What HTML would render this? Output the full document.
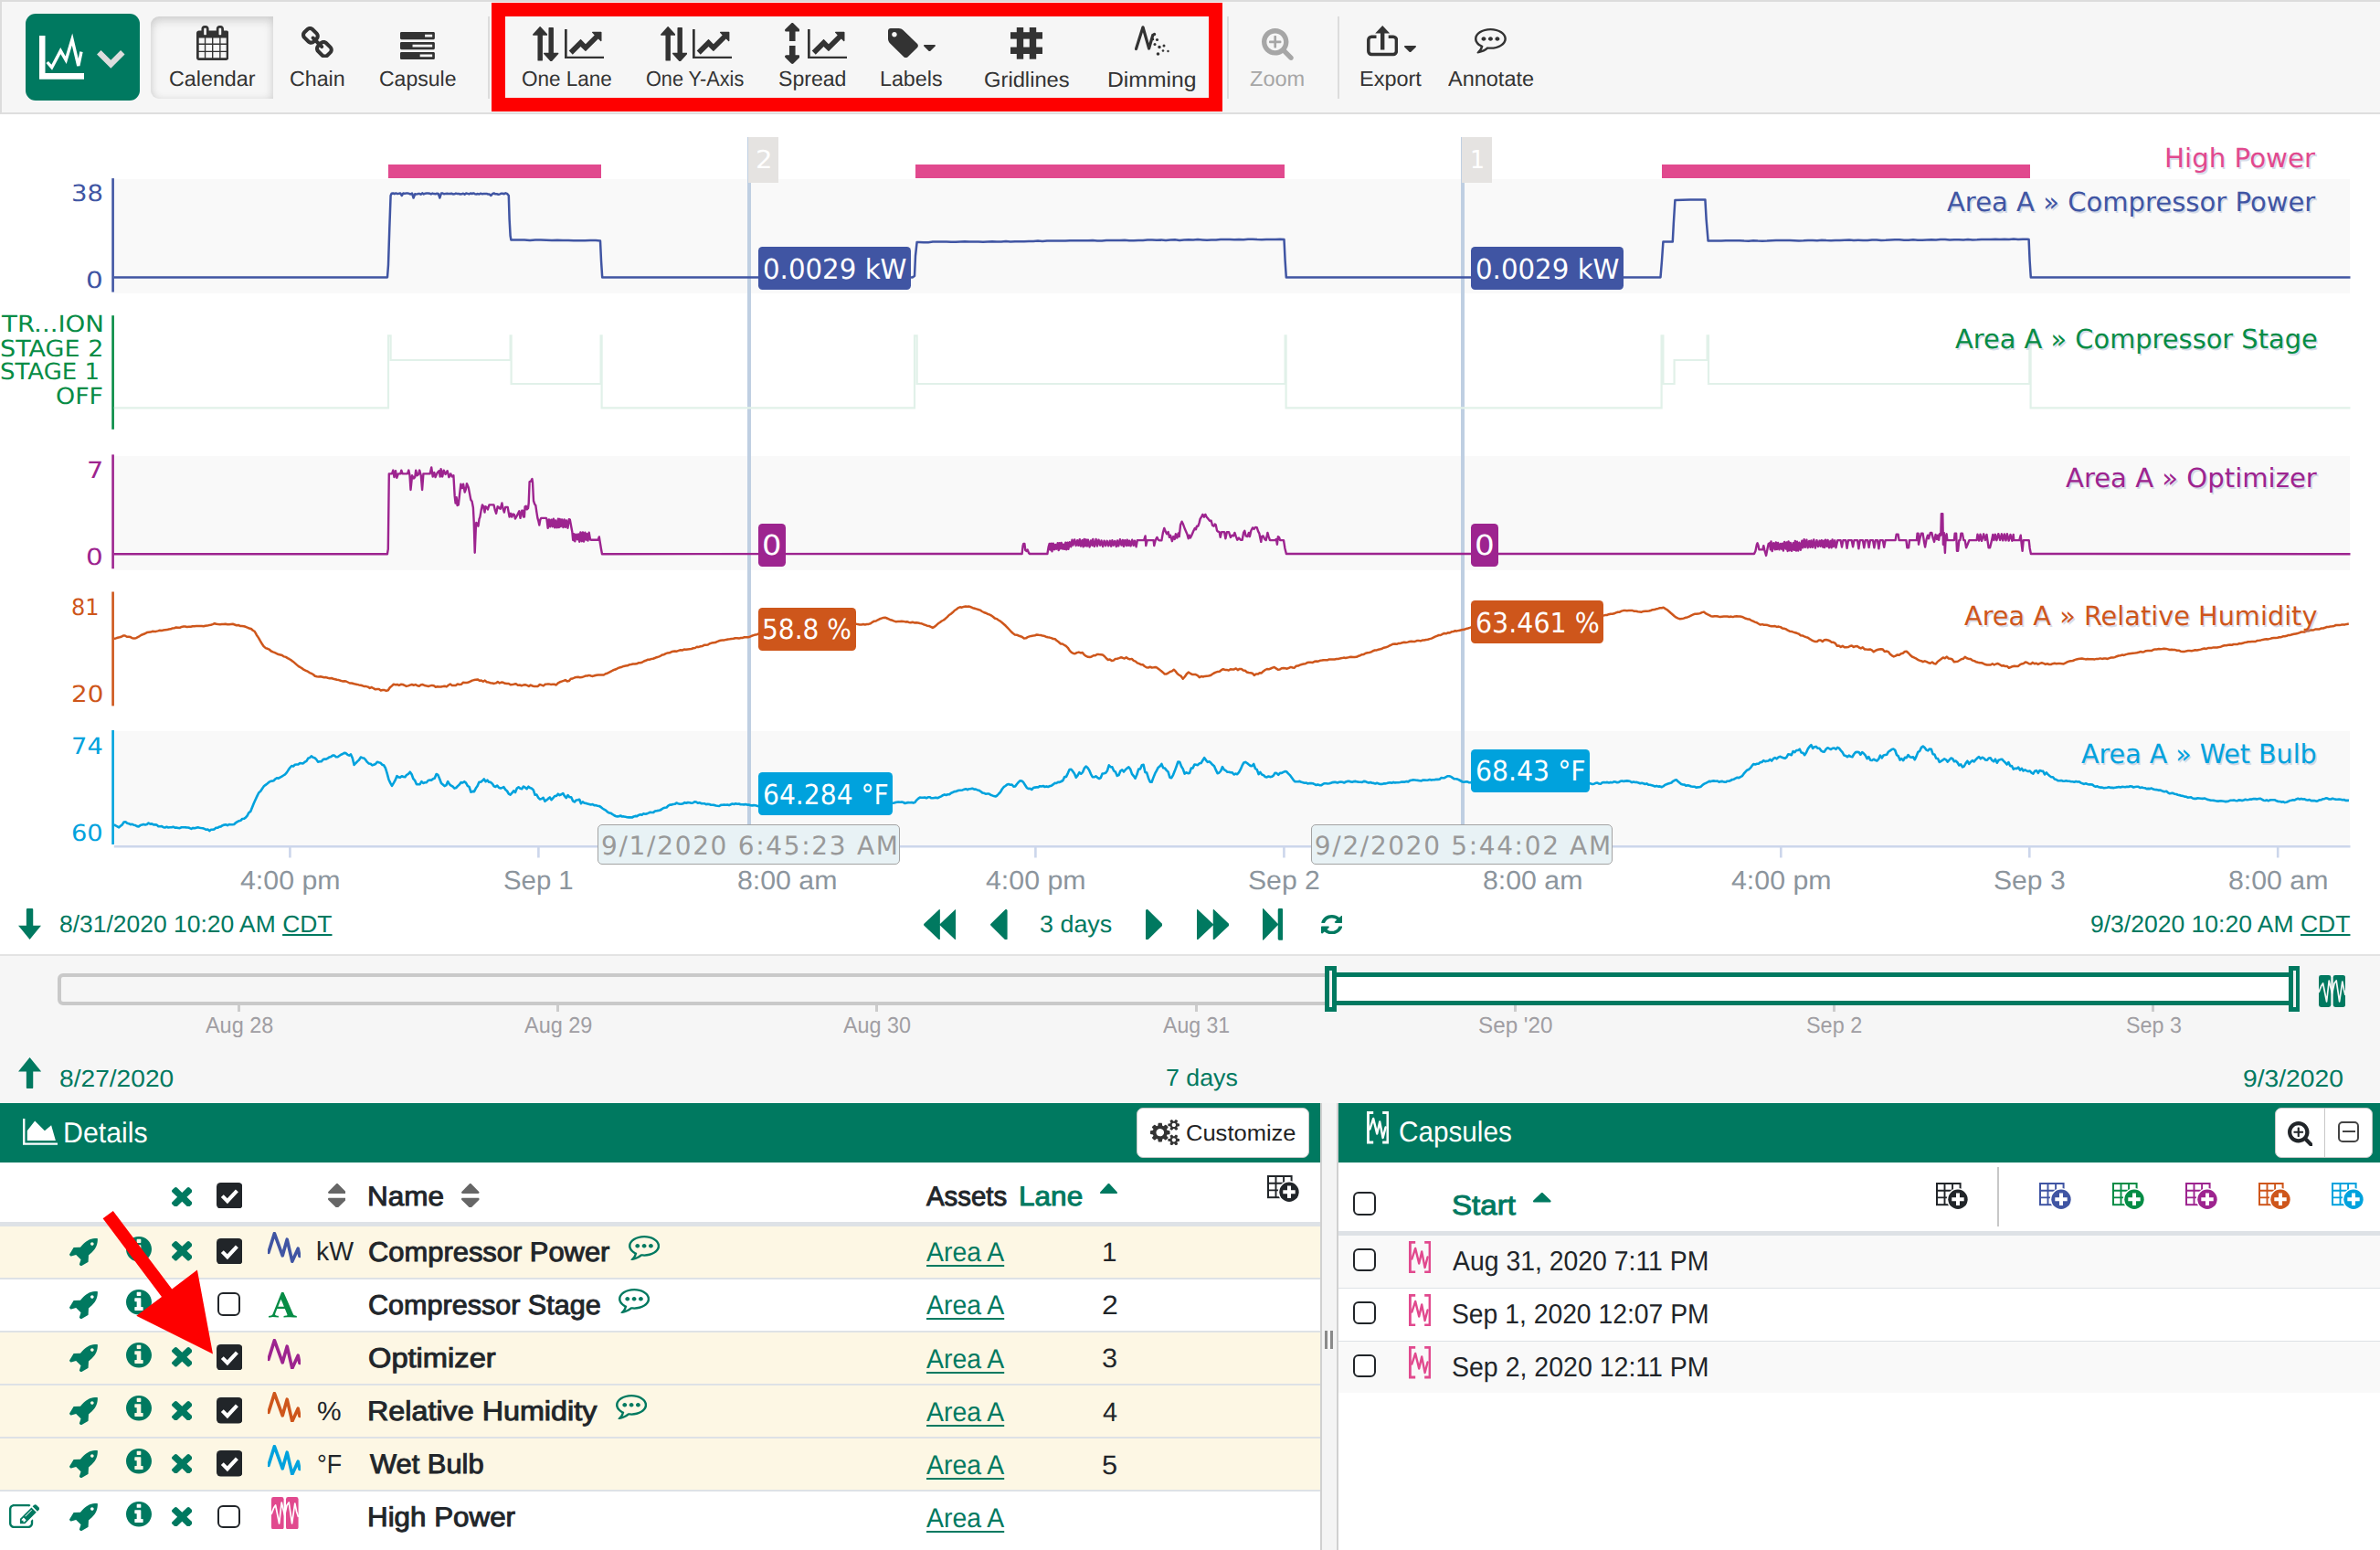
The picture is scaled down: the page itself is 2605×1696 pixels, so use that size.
<!DOCTYPE html>
<html lang="en"><head><meta charset="utf-8"><title>Seeq Workbench - Trend</title>
<style>
html,body{margin:0;padding:0;background:#fff}
body{width:2605px;height:1696px;position:relative;overflow:hidden;font-family:"Liberation Sans",sans-serif}
#app{position:absolute;left:0;top:0;width:2605px;height:1696px;overflow:hidden}
#app div,#app svg.i{position:absolute}
.t{position:absolute;white-space:pre;line-height:1;transform-origin:0 0;display:block;text-rendering:geometricPrecision}
a.t,.u{text-decoration:underline}
</style></head>
<body><div id="app">
<div class="tb" style="left:0px;top:0px;width:2605px;height:124.6px;background:#f6f6f6;border-top:2px solid #dcdcdc;border-left:2px solid #dcdcdc;border-bottom:2.2px solid #dedede;box-sizing:border-box;"></div>
<div style="left:28px;top:14.8px;width:125.2px;height:95.2px;background:#007960;border-radius:11px;"></div>
<svg class="i" style="left:0px;top:0px;width:160px;height:124px;" viewBox="0 0 160 124" preserveAspectRatio="none"><polyline points="43,39 43,86.7 92,86.7" fill="none" stroke="#fff" stroke-width="0"/><path d="M43 39h6.5v41h42.5v6.7h-49z" fill="#fff"/><polyline points="51.7,68 56.7,73.7 66.3,55.6 72.2,65.8 79,43 85.8,72 89,56.7" fill="none" stroke="#fff" stroke-width="3.4" stroke-linejoin="miter" stroke-linecap="butt"/><polyline points="108.3,57.3 121.3,70.3 134.3,57.3" fill="none" stroke="#ddd" stroke-width="6.4"/></svg>
<div style="left:165px;top:17.8px;width:133.8px;height:90px;background:#f6f6f6;border-radius:9px 0 0 9px;box-shadow:inset 0 5px 11px rgba(0,0,0,.13), inset 0 0 9px rgba(0,0,0,.07);"></div>
<svg class="i" style="left:214.9px;top:28.4px;width:35.4px;height:37.9px;" viewBox="0 -1536 1664 1792" preserveAspectRatio="none"><path fill="#333" d="M128 128V-160H416V128ZM480 128V-160H800V128ZM128 -224V-544H416V-224ZM480 -224V-544H800V-224ZM128 -608V-896H416V-608ZM864 128V-160H1184V128ZM480 -608V-896H800V-608ZM1248 128V-160H1536V128ZM864 -224V-544H1184V-224ZM512 -1088C512 -1071 497 -1056 480 -1056H416C399 -1056 384 -1071 384 -1088V-1376C384 -1393 399 -1408 416 -1408H480C497 -1408 512 -1393 512 -1376V-1088ZM1248 -224V-544H1536V-224ZM864 -608V-896H1184V-608ZM1248 -608V-896H1536V-608ZM1280 -1088C1280 -1071 1265 -1056 1248 -1056H1184C1167 -1056 1152 -1071 1152 -1088V-1376C1152 -1393 1167 -1408 1184 -1408H1248C1265 -1408 1280 -1393 1280 -1376V-1088ZM1664 -1152C1664 -1222 1606 -1280 1536 -1280H1408V-1376C1408 -1464 1336 -1536 1248 -1536H1184C1096 -1536 1024 -1464 1024 -1376V-1280H640V-1376C640 -1464 568 -1536 480 -1536H416C328 -1536 256 -1464 256 -1376V-1280H128C58 -1280 0 -1222 0 -1152V128C0 198 58 256 128 256H1536C1606 256 1664 198 1664 128Z"/></svg>
<span class="t" style="left:184.84px;top:75px;font-size:23.4px;color:#333;transform:scaleX(0.9955);">Calendar</span>
<svg class="i" style="left:330px;top:28.8px;width:34.8px;height:34.7px;" viewBox="16 -1520 1632 1632" preserveAspectRatio="none"><path fill="#333" d="M1456 -320C1456 -295 1446 -271 1428 -253L1281 -107C1263 -90 1238 -81 1213 -81C1188 -81 1163 -90 1145 -108L939 -315C921 -333 911 -358 911 -383C911 -413 923 -436 944 -456C977 -423 1005 -384 1056 -384C1109 -384 1152 -427 1152 -480C1152 -531 1113 -559 1080 -592C1100 -613 1123 -624 1152 -624C1177 -624 1202 -614 1220 -596L1428 -388C1446 -370 1456 -346 1456 -320ZM753 -1025C753 -995 741 -972 720 -952C687 -985 659 -1024 608 -1024C555 -1024 512 -981 512 -928C512 -877 551 -849 584 -816C564 -795 541 -785 512 -785C487 -785 462 -794 444 -812L236 -1020C218 -1038 208 -1062 208 -1088C208 -1113 218 -1137 236 -1155L383 -1301C401 -1318 426 -1328 451 -1328C476 -1328 501 -1318 519 -1300L725 -1093C743 -1075 753 -1050 753 -1025ZM1648 -320C1648 -397 1619 -469 1564 -524L1356 -732C1302 -786 1228 -816 1152 -816C1073 -816 999 -784 944 -728L856 -816C912 -871 944 -946 944 -1025C944 -1101 915 -1174 861 -1228L655 -1435C601 -1490 528 -1520 451 -1520C375 -1520 302 -1491 248 -1437L101 -1291C47 -1238 16 -1164 16 -1088C16 -1011 45 -939 100 -884L308 -676C362 -622 436 -592 512 -592C591 -592 665 -624 720 -680L808 -592C752 -537 720 -462 720 -383C720 -307 749 -234 803 -180L1009 27C1063 82 1136 112 1213 112C1289 112 1362 83 1416 29L1563 -117C1617 -170 1648 -244 1648 -320Z"/></svg>
<span class="t" style="left:316.84px;top:75px;font-size:23.4px;color:#333;transform:scaleX(0.9918);">Chain</span>
<svg class="i" style="left:437.9px;top:35.2px;width:37.9px;height:30.1px;" viewBox="0 -1408 1792 1408" preserveAspectRatio="none"><path fill="#333" d="M1024 -128V-256H1664V-128ZM640 -640V-768H1664V-640ZM1280 -1152V-1280H1664V-1152ZM1792 -320C1792 -355 1763 -384 1728 -384H64C29 -384 0 -355 0 -320V-64C0 -29 29 0 64 0H1728C1763 0 1792 -29 1792 -64ZM1792 -832C1792 -867 1763 -896 1728 -896H64C29 -896 0 -867 0 -832V-576C0 -541 29 -512 64 -512H1728C1763 -512 1792 -541 1792 -576ZM1792 -1344C1792 -1379 1763 -1408 1728 -1408H64C29 -1408 0 -1379 0 -1344V-1088C0 -1053 29 -1024 64 -1024H1728C1763 -1024 1792 -1053 1792 -1088Z"/></svg>
<span class="t" style="left:414.55px;top:75px;font-size:23.4px;color:#333;transform:scaleX(0.9838);">Capsule</span>
<div style="left:534px;top:17.8px;width:2px;height:90px;background:#dcdcdc;"></div>
<div style="left:538px;top:2.5px;width:800px;height:119px;border:15px solid #fe0000;box-sizing:border-box;"></div>
<svg class="i" style="left:582.7px;top:29px;width:16.4px;height:37.6px;" viewBox="0.27 -1472 767.45 1728" preserveAspectRatio="none"><path fill="#333" d="M765 -1043C770 -1055 768 -1068 760 -1078L405 -1462C399 -1468 390 -1472 381 -1472C381 -1472 381 -1472 381 -1472C372 -1472 364 -1468 358 -1462L8 -1078C0 -1068 -2 -1055 3 -1043C8 -1031 19 -1024 32 -1024H256V224C256 242 270 256 288 256H480C498 256 512 242 512 224V-1024H736C749 -1024 760 -1032 765 -1043Z"/></svg><svg class="i" style="left:595.3px;top:29.8px;width:16.4px;height:37.6px;" viewBox="0.27 -1536 767.45 1728" preserveAspectRatio="none"><path fill="#333" d="M765 -237C760 -249 749 -256 736 -256H512V-1504C512 -1522 498 -1536 480 -1536H288C270 -1536 256 -1522 256 -1504V-256H32C19 -256 8 -248 3 -237C-2 -225 0 -212 8 -202L363 182C369 188 378 192 387 192C387 192 387 192 387 192C396 192 404 188 410 182L760 -202C768 -212 770 -225 765 -237Z"/></svg>
<svg class="i" style="left:617.8px;top:31.8px;width:43.2px;height:32.4px;" viewBox="0 -1408 2048 1536" preserveAspectRatio="none"><path fill="#333" d="M2048 0H128V-1408H0V128H2048ZM1920 -1248C1920 -1266 1906 -1280 1888 -1280H1453C1425 -1280 1410 -1246 1431 -1225L1552 -1104L1088 -640L855 -873C842 -886 822 -886 809 -873L224 -288L416 -96L832 -512L1065 -279C1078 -266 1098 -266 1111 -279L1744 -912L1865 -791C1886 -770 1920 -785 1920 -813Z"/></svg>
<span class="t" style="left:571.14px;top:75px;font-size:23.4px;color:#333;transform:scaleX(0.9608);">One Lane</span>
<svg class="i" style="left:722.9px;top:29px;width:16.4px;height:37.6px;" viewBox="0.27 -1472 767.45 1728" preserveAspectRatio="none"><path fill="#333" d="M765 -1043C770 -1055 768 -1068 760 -1078L405 -1462C399 -1468 390 -1472 381 -1472C381 -1472 381 -1472 381 -1472C372 -1472 364 -1468 358 -1462L8 -1078C0 -1068 -2 -1055 3 -1043C8 -1031 19 -1024 32 -1024H256V224C256 242 270 256 288 256H480C498 256 512 242 512 224V-1024H736C749 -1024 760 -1032 765 -1043Z"/></svg><svg class="i" style="left:735.5px;top:29.8px;width:16.4px;height:37.6px;" viewBox="0.27 -1536 767.45 1728" preserveAspectRatio="none"><path fill="#333" d="M765 -237C760 -249 749 -256 736 -256H512V-1504C512 -1522 498 -1536 480 -1536H288C270 -1536 256 -1522 256 -1504V-256H32C19 -256 8 -248 3 -237C-2 -225 0 -212 8 -202L363 182C369 188 378 192 387 192C387 192 387 192 387 192C396 192 404 188 410 182L760 -202C768 -212 770 -225 765 -237Z"/></svg>
<svg class="i" style="left:758.3px;top:31.8px;width:43.1px;height:32.4px;" viewBox="0 -1408 2048 1536" preserveAspectRatio="none"><path fill="#333" d="M2048 0H128V-1408H0V128H2048ZM1920 -1248C1920 -1266 1906 -1280 1888 -1280H1453C1425 -1280 1410 -1246 1431 -1225L1552 -1104L1088 -640L855 -873C842 -886 822 -886 809 -873L224 -288L416 -96L832 -512L1065 -279C1078 -266 1098 -266 1111 -279L1744 -912L1865 -791C1886 -770 1920 -785 1920 -813Z"/></svg>
<span class="t" style="left:706.88px;top:75px;font-size:23.4px;color:#333;transform:scaleX(0.9269);">One Y-Axis</span>
<svg class="i" style="left:858.8px;top:25px;width:16.5px;height:44.9px;" viewBox="64 -1536 640 1792" preserveAspectRatio="none"><path fill="#333" d="M704 -1216C704 -1233 697 -1249 685 -1261L429 -1517C417 -1529 401 -1536 384 -1536C367 -1536 351 -1529 339 -1517L83 -1261C71 -1249 64 -1233 64 -1216C64 -1181 93 -1152 128 -1152H256V-128H128C93 -128 64 -99 64 -64C64 -47 71 -31 83 -19L339 237C351 249 367 256 384 256C401 256 417 249 429 237L685 -19C697 -31 704 -47 704 -64C704 -99 675 -128 640 -128H512V-1152H640C675 -1152 704 -1181 704 -1216Z"/></svg>
<div style="left:862px;top:44.5px;width:10px;height:5.8px;background:#f6f6f6;"></div>
<svg class="i" style="left:883.7px;top:31.8px;width:43.2px;height:32.4px;" viewBox="0 -1408 2048 1536" preserveAspectRatio="none"><path fill="#333" d="M2048 0H128V-1408H0V128H2048ZM1920 -1248C1920 -1266 1906 -1280 1888 -1280H1453C1425 -1280 1410 -1246 1431 -1225L1552 -1104L1088 -640L855 -873C842 -886 822 -886 809 -873L224 -288L416 -96L832 -512L1065 -279C1078 -266 1098 -266 1111 -279L1744 -912L1865 -791C1886 -770 1920 -785 1920 -813Z"/></svg>
<span class="t" style="left:851.66px;top:75px;font-size:23.4px;color:#333;transform:scaleX(0.9864);">Spread</span>
<svg class="i" style="left:972.2px;top:31.3px;width:32.9px;height:32.2px;" viewBox="0 -1408 1515 1515" preserveAspectRatio="none"><path fill="#333" d="M448 -1088C448 -1017 391 -960 320 -960C249 -960 192 -1017 192 -1088C192 -1159 249 -1216 320 -1216C391 -1216 448 -1159 448 -1088ZM1515 -512C1515 -546 1501 -579 1478 -603L763 -1317C712 -1368 615 -1408 544 -1408H128C58 -1408 0 -1350 0 -1280V-864C0 -793 40 -696 91 -646L806 70C829 93 862 107 896 107C930 107 963 93 987 70L1478 -422C1501 -445 1515 -478 1515 -512Z"/></svg>
<svg class="i" style="left:1010.8px;top:48.8px;width:12.9px;height:7.4px;" viewBox="0 -896 1024 576" preserveAspectRatio="none"><path fill="#333" d="M1024 -832C1024 -867 995 -896 960 -896H64C29 -896 0 -867 0 -832C0 -815 7 -799 19 -787L467 -339C479 -327 495 -320 512 -320C529 -320 545 -327 557 -339L1005 -787C1017 -799 1024 -815 1024 -832Z"/></svg>
<span class="t" style="left:963.49px;top:75px;font-size:23.4px;color:#333;transform:scaleX(0.9939);">Labels</span>
<svg class="i" style="left:1105.8px;top:30px;width:35.2px;height:34.7px;" viewBox="0 0 35.2 34.7" preserveAspectRatio="none"><rect x="6.8" y="0" width="7.4" height="34.7" fill="#333"/><rect x="20.8" y="0" width="7.4" height="34.7" fill="#333"/><rect x="0" y="5.2" width="35.2" height="7.4" fill="#333"/><rect x="0" y="21.6" width="35.2" height="7.4" fill="#333"/></svg>
<span class="t" style="left:1076.51px;top:76px;font-size:23.4px;color:#333;transform:scaleX(1.0152);">Gridlines</span>
<svg class="i" style="left:1241.5px;top:28.4px;width:38.1px;height:32.9px;" viewBox="0 0 38.1 32.9" preserveAspectRatio="none"><polyline points="1.5,25.5 9,1.8 15.6,25 19.8,10.5" fill="none" stroke="#333" stroke-width="3.2" stroke-linejoin="round" stroke-linecap="round"/><circle cx="21.5" cy="9.5" r="1.7" fill="#333"/><circle cx="24.5" cy="15.5" r="1.6" fill="#333"/><circle cx="22" cy="20.5" r="1.5" fill="#333"/><circle cx="27" cy="23.5" r="1.7" fill="#333"/><circle cx="32" cy="22" r="1.5" fill="#333"/><circle cx="25.5" cy="31" r="1.8" fill="#333"/><circle cx="31" cy="27.5" r="1.3" fill="#333"/><circle cx="36.5" cy="28" r="1.2" fill="#333"/><circle cx="20" cy="15" r="1.2" fill="#333"/></svg>
<span class="t" style="left:1211.77px;top:76px;font-size:23.4px;color:#333;transform:scaleX(1.0574);">Dimming</span>
<div style="left:1342.6px;top:17.8px;width:2px;height:90px;background:#dcdcdc;"></div>
<svg class="i" style="left:1381px;top:31.3px;width:34.8px;height:35px;" viewBox="0 -1408 1664 1664" preserveAspectRatio="none"><path fill="#a6a6a6" d="M1024 -736C1024 -753 1009 -768 992 -768H768V-992C768 -1009 753 -1024 736 -1024H672C655 -1024 640 -1009 640 -992V-768H416C399 -768 384 -753 384 -736V-672C384 -655 399 -640 416 -640H640V-416C640 -399 655 -384 672 -384H736C753 -384 768 -399 768 -416V-640H992C1009 -640 1024 -655 1024 -672ZM1152 -704C1152 -457 951 -256 704 -256C457 -256 256 -457 256 -704C256 -951 457 -1152 704 -1152C951 -1152 1152 -951 1152 -704ZM1664 128C1664 94 1650 61 1627 38L1284 -305C1365 -422 1408 -562 1408 -704C1408 -1093 1093 -1408 704 -1408C315 -1408 0 -1093 0 -704C0 -315 315 0 704 0C846 0 986 -43 1103 -124L1446 218C1469 242 1502 256 1536 256C1607 256 1664 199 1664 128Z"/></svg>
<span class="t" style="left:1368.27px;top:75px;font-size:23.4px;color:#a6a6a6;transform:scaleX(1.0075);">Zoom</span>
<div style="left:1464px;top:17.8px;width:2px;height:90px;background:#dcdcdc;"></div>
<svg class="i" style="left:1495.7px;top:28.4px;width:34.6px;height:33.2px;" viewBox="0 0 34.6 33.2" preserveAspectRatio="none"><path d="M10.5 12.2H5.2a3.4 3.4 0 0 0-3.4 3.4v12.4a3.4 3.4 0 0 0 3.4 3.4h23.8a3.4 3.4 0 0 0 3.4-3.4V15.6a3.4 3.4 0 0 0-3.4-3.4h-5.3" fill="none" stroke="#333" stroke-width="3.5"/><path d="M15 26.4V8.5H9.2L17.2 0l8 8.5h-5.8v17.9z" fill="#333"/></svg>
<svg class="i" style="left:1537px;top:49.5px;width:13px;height:7.3px;" viewBox="0 -896 1024 576" preserveAspectRatio="none"><path fill="#333" d="M1024 -832C1024 -867 995 -896 960 -896H64C29 -896 0 -867 0 -832C0 -815 7 -799 19 -787L467 -339C479 -327 495 -320 512 -320C529 -320 545 -327 557 -339L1005 -787C1017 -799 1024 -815 1024 -832Z"/></svg>
<span class="t" style="left:1488.47px;top:75px;font-size:23.4px;color:#333;transform:scaleX(1.0039);">Export</span>
<svg class="i" style="left:1613.9px;top:31.2px;width:34.9px;height:27.4px;" viewBox="0 -1280 1792 1536" preserveAspectRatio="none"><path fill="#333" d="M640 -640C640 -711 583 -768 512 -768C441 -768 384 -711 384 -640C384 -569 441 -512 512 -512C583 -512 640 -569 640 -640ZM1024 -640C1024 -711 967 -768 896 -768C825 -768 768 -711 768 -640C768 -569 825 -512 896 -512C967 -512 1024 -569 1024 -640ZM1408 -640C1408 -711 1351 -768 1280 -768C1209 -768 1152 -711 1152 -640C1152 -569 1209 -512 1280 -512C1351 -512 1408 -569 1408 -640ZM896 -1152C1312 -1152 1664 -918 1664 -640C1664 -362 1312 -128 896 -128C853 -128 809 -131 766 -136L709 -142L666 -104C584 -32 492 25 391 67C417 21 442 -34 461 -105L488 -201L401 -251C228 -349 128 -491 128 -640C128 -918 480 -1152 896 -1152ZM1792 -640C1792 -993 1391 -1280 896 -1280C401 -1280 0 -993 0 -640C0 -437 132 -256 338 -139C291 28 219 88 156 159C141 177 124 192 129 217C129 217 129 217 129 218C134 240 152 256 172 256C173 256 175 256 177 256C216 251 255 244 291 234C464 190 620 108 751 -8C798 -3 847 0 896 0C1391 0 1792 -286 1792 -640Z"/></svg>
<span class="t" style="left:1584.95px;top:75px;font-size:23.4px;color:#333;transform:scaleX(1.0043);">Annotate</span>
<div style="left:124.8px;top:196.3px;width:2447.7px;height:124.7px;background:#f9f9f9;"></div>
<div style="left:124.8px;top:498.8px;width:2447.7px;height:124.9px;background:#f9f9f9;"></div>
<div style="left:124.8px;top:800.3px;width:2447.7px;height:125px;background:#f9f9f9;"></div>
<div style="left:425.4px;top:180px;width:232.6px;height:14.8px;background:#E1498E;"></div>
<div style="left:1001.5px;top:180px;width:404.3px;height:14.8px;background:#E1498E;"></div>
<div style="left:1819px;top:180px;width:403px;height:14.8px;background:#E1498E;"></div>
<div style="left:818.2px;top:150px;width:3.8px;height:752.5px;background:#bfcfe2;"></div>
<div style="left:1599.3px;top:150px;width:3.8px;height:752.5px;background:#bfcfe2;"></div>
<svg class="i" style="left:0;top:140px;width:2605px;height:830px" viewBox="0 140 2605 830"><line x1="123.6" y1="195.1" x2="123.6" y2="319.6" stroke="#4055A3" stroke-width="2.6"/><line x1="123.6" y1="345.2" x2="123.6" y2="469.8" stroke="#068C45" stroke-width="2.6"/><line x1="123.6" y1="497.4" x2="123.6" y2="622.3" stroke="#9D248F" stroke-width="2.6"/><line x1="123.6" y1="647.5" x2="123.6" y2="772.4" stroke="#CE561B" stroke-width="2.6"/><line x1="123.6" y1="799" x2="123.6" y2="924" stroke="#00A2DD" stroke-width="2.6"/><path d="M124.8 926.3H2572.5" stroke="#ccd6eb" stroke-width="2.6" fill="none"/><line x1="317.4" y1="926" x2="317.4" y2="938.5" stroke="#ccd6eb" stroke-width="2.6"/><line x1="589.4" y1="926" x2="589.4" y2="938.5" stroke="#ccd6eb" stroke-width="2.6"/><line x1="861.4" y1="926" x2="861.4" y2="938.5" stroke="#ccd6eb" stroke-width="2.6"/><line x1="1133.4" y1="926" x2="1133.4" y2="938.5" stroke="#ccd6eb" stroke-width="2.6"/><line x1="1405.4" y1="926" x2="1405.4" y2="938.5" stroke="#ccd6eb" stroke-width="2.6"/><line x1="1677.3" y1="926" x2="1677.3" y2="938.5" stroke="#ccd6eb" stroke-width="2.6"/><line x1="1949.3" y1="926" x2="1949.3" y2="938.5" stroke="#ccd6eb" stroke-width="2.6"/><line x1="2221.3" y1="926" x2="2221.3" y2="938.5" stroke="#ccd6eb" stroke-width="2.6"/><line x1="2493.2" y1="926" x2="2493.2" y2="938.5" stroke="#ccd6eb" stroke-width="2.6"/><polyline points="124.8,446.4 425.0,446.4 425.0,367.3 427.6,367.3 427.6,394.0 558.6,394.0 558.6,367.3 559.6,367.3 559.6,420.0 657.6,420.0 657.6,367.3 658.6,367.3 658.6,446.4 1001.0,446.4 1001.0,367.3 1003.6,367.3 1003.6,420.0 1406.6,420.0 1406.6,367.3 1407.6,367.3 1407.6,446.4 1818.6,446.4 1818.6,367.3 1820.4,367.3 1820.4,420.0 1832.6,420.0 1832.6,394.0 1868.6,394.0 1868.6,367.3 1870.0,367.3 1870.0,420.0 2221.4,420.0 2221.4,367.3 2222.6,367.3 2222.6,446.4 2572.5,446.4" fill="none" stroke="#e1f1e9" stroke-width="2.2" stroke-linejoin="miter"/><polyline points="124.8,303.4 424.0,303.4 425.0,290.0 426.3,250.0 427.6,214.0 428.6,211.8 430.2,211.5 431.8,212.2 433.4,211.4 435.0,212.1 436.6,211.8 438.2,211.4 439.8,214.0 441.4,211.4 443.0,211.9 444.6,211.4 446.2,211.4 447.8,211.9 449.4,212.5 451.0,211.5 452.6,216.5 454.2,212.2 455.8,212.6 457.4,212.1 459.0,211.9 460.6,212.7 462.2,211.4 463.8,212.5 465.4,211.7 467.0,211.5 468.6,211.5 470.2,211.7 471.8,212.4 473.4,211.6 475.0,212.1 476.6,212.2 478.2,211.8 479.8,212.1 481.4,216.5 483.0,211.4 484.6,211.6 486.2,212.3 487.8,211.9 489.4,211.7 491.0,212.1 492.6,211.9 494.2,211.7 495.8,212.4 497.4,212.3 499.0,211.6 500.6,212.1 502.2,212.0 503.8,212.5 505.4,212.3 507.0,211.7 508.6,212.7 510.2,211.5 511.8,211.9 513.4,212.4 515.0,211.5 516.6,212.0 518.2,211.4 519.8,212.2 521.4,212.4 523.0,212.1 524.6,212.5 526.2,211.7 527.8,212.3 529.4,212.1 531.0,212.1 532.6,211.9 534.2,212.5 535.8,212.6 537.4,214.0 539.0,212.2 540.6,211.4 542.2,212.3 543.8,212.2 545.4,212.7 547.0,212.5 548.6,211.7 550.2,211.8 551.8,212.2 553.4,211.3 555.0,211.9 556.8,214.0 557.6,240.0 558.6,258.0 559.4,262.6 562.0,262.4 568.0,262.4 574.0,262.4 580.0,262.9 586.0,262.5 592.0,262.6 598.0,262.8 604.0,263.1 610.0,262.7 616.0,262.9 622.0,263.0 628.0,263.3 634.0,263.3 640.0,263.3 646.0,263.0 652.0,263.1 657.0,263.5 658.0,285.0 659.2,303.4 998.8,303.4 1001.0,302.0 1002.0,280.0 1003.6,265.0 1006.0,264.9 1011.0,265.2 1016.0,265.2 1021.0,264.6 1026.0,264.6 1031.0,264.6 1036.0,264.6 1041.0,264.7 1046.0,264.7 1051.0,264.5 1056.0,264.2 1061.0,264.5 1066.0,264.4 1071.0,264.5 1076.0,264.7 1081.0,264.5 1086.0,264.3 1091.0,264.4 1096.0,264.4 1101.0,263.9 1106.0,264.4 1111.0,264.3 1116.0,264.3 1121.0,264.2 1126.0,263.9 1131.0,263.9 1136.0,263.6 1141.0,263.9 1146.0,263.5 1151.0,263.5 1156.0,263.5 1161.0,263.4 1166.0,263.5 1171.0,263.3 1176.0,263.2 1181.0,263.3 1186.0,263.2 1191.0,263.3 1196.0,263.1 1201.0,263.6 1206.0,263.4 1211.0,263.0 1216.0,263.0 1221.0,263.1 1226.0,263.0 1231.0,262.8 1236.0,263.3 1241.0,263.3 1246.0,262.9 1251.0,262.9 1256.0,262.6 1261.0,262.6 1266.0,262.7 1271.0,262.6 1276.0,262.9 1281.0,262.4 1286.0,262.3 1291.0,262.9 1296.0,262.6 1301.0,262.2 1306.0,262.5 1311.0,262.1 1316.0,262.4 1321.0,262.7 1326.0,262.5 1331.0,262.4 1336.0,262.0 1341.0,262.1 1346.0,261.9 1351.0,262.3 1356.0,262.0 1361.0,262.2 1366.0,261.8 1371.0,261.7 1376.0,262.1 1381.0,262.2 1386.0,262.0 1391.0,261.9 1396.0,261.9 1401.0,261.8 1405.5,262.0 1406.6,285.0 1407.8,303.4 1817.5,303.4 1819.0,285.0 1820.4,264.6 1830.8,264.4 1831.8,245.0 1833.4,219.0 1850.0,218.6 1866.4,218.4 1867.6,240.0 1869.6,263.6 1874.0,263.4 1879.0,263.6 1884.0,263.4 1889.0,263.2 1894.0,263.2 1899.0,263.3 1904.0,263.3 1909.0,263.6 1914.0,263.7 1919.0,263.3 1924.0,263.6 1929.0,263.7 1934.0,263.6 1939.0,263.2 1944.0,263.0 1949.0,263.0 1954.0,263.0 1959.0,263.0 1964.0,263.2 1969.0,263.4 1974.0,263.3 1979.0,263.0 1984.0,263.1 1989.0,263.2 1994.0,262.7 1999.0,263.1 2004.0,263.2 2009.0,263.1 2014.0,263.0 2019.0,262.8 2024.0,262.6 2029.0,263.0 2034.0,262.7 2039.0,263.0 2044.0,263.0 2049.0,262.6 2054.0,262.6 2059.0,263.0 2064.0,262.8 2069.0,262.4 2074.0,262.3 2079.0,262.3 2084.0,262.8 2089.0,262.7 2094.0,262.2 2099.0,262.7 2104.0,262.7 2109.0,262.5 2114.0,262.2 2119.0,262.4 2124.0,262.0 2129.0,261.9 2134.0,262.6 2139.0,262.3 2144.0,262.2 2149.0,262.5 2154.0,262.1 2159.0,262.4 2164.0,262.3 2169.0,261.9 2174.0,261.9 2179.0,261.9 2184.0,261.8 2189.0,262.0 2194.0,261.8 2199.0,261.9 2204.0,261.6 2209.0,262.1 2214.0,261.7 2219.0,261.8 2220.6,262.0 2221.6,285.0 2222.8,303.4 2572.5,303.4" fill="none" stroke="#4055A3" stroke-width="2.5" stroke-linejoin="round"/><polyline points="124.8,606.2 423.9,606.3 424.8,600.9 425.8,518.4 429.0,518.4 430.3,514.6 431.5,522.1 433.0,515.2 434.3,522.8 435.9,518.4 438.4,518.4 439.3,514.6 440.6,518.4 446.0,518.4 447.3,514.6 448.5,520.3 449.5,536.0 451.1,520.3 452.9,523.4 454.2,522.1 455.2,514.6 456.5,520.3 458.0,519.0 459.2,514.6 460.8,520.3 462.1,536.0 463.4,518.4 470.6,518.4 472.2,511.4 473.7,521.5 475.3,517.1 476.6,522.1 478.8,517.1 480.7,515.2 481.7,521.5 482.6,513.3 484.2,521.5 485.7,514.6 487.6,519.0 489.7,515.2 491.4,522.1 493.3,518.4 494.8,521.5 496.4,520.3 497.7,542.9 498.6,550.5 499.6,544.2 500.6,553.0 501.8,552.4 503.4,537.9 504.4,529.7 505.9,534.1 507.1,529.7 508.7,538.5 509.9,535.4 510.9,529.1 512.8,533.5 514.1,540.4 515.3,546.7 516.6,548.6 517.9,555.5 518.7,570.7 519.7,604.7 520.8,578.2 521.3,571.9 522.5,573.2 523.5,575.7 524.5,568.2 525.4,565.6 526.7,558.1 527.9,552.4 529.2,554.3 530.5,560.6 531.3,554.3 532.4,554.9 533.9,557.4 535.5,552.4 540.5,552.4 541.8,558.1 543.1,561.8 544.7,554.3 546.2,555.5 547.7,556.8 549.4,550.5 550.6,556.8 551.9,560.6 553.2,554.9 555.7,554.9 556.9,561.8 557.6,565.6 559.1,561.8 560.3,565.6 561.6,562.5 562.9,563.1 563.9,567.5 565.8,564.4 568.3,559.3 569.5,566.9 571.2,558.7 572.1,558.7 572.9,565.6 573.9,565.6 574.6,554.3 575.8,553.7 576.7,557.4 578.0,556.2 578.7,550.5 579.6,527.2 581.1,526.6 582.4,524.0 583.0,527.8 584.0,548.0 585.3,551.8 586.3,553.0 587.4,560.6 588.4,566.9 589.5,570.7 590.3,574.5 591.3,568.8 592.2,566.9 597.9,566.9 598.5,568.4 599.7,577.8 600.9,568.5 602.2,576.4 603.4,568.8 604.8,576.2 605.8,567.7 607.2,577.4 608.1,569.5 609.6,577.3 610.9,567.8 611.8,577.1 612.7,567.9 613.8,576.1 615.0,568.4 616.4,577.0 617.6,568.5 618.9,576.9 620.0,569.5 621.5,577.7 622.8,568.1 623.8,568.5 626.3,582.0 627.2,591.0 628.1,584.1 629.3,592.3 630.5,584.6 632.0,590.3 633.0,584.5 634.3,592.7 635.4,582.5 636.8,592.2 637.9,582.5 639.0,592.6 640.4,582.6 641.5,590.5 642.5,584.2 643.5,591.6 644.7,582.8 646.1,590.6 647.7,590.8 654.6,590.8 655.8,587.5 657.2,596.0 657.8,599.7 659.0,606.2 1118.6,606.0 1119.6,597.1 1120.3,595.0 1121.4,595.0 1122.3,602.1 1123.6,602.9 1124.6,601.4 1126.0,605.0 1127.1,606.0 1146.4,606.0 1147.6,598.6 1148.6,595.0 1149.5,601.6 1150.6,594.7 1151.5,603.4 1152.8,594.8 1154.1,601.3 1155.2,596.0 1156.3,600.7 1157.7,594.2 1158.7,602.1 1159.7,594.3 1160.5,600.2 1161.7,594.0 1162.8,600.6 1163.9,595.6 1165.0,600.9 1166.3,593.6 1167.2,601.4 1168.5,593.6 1169.4,600.8 1170.8,593.3 1172.2,598.3 1173.5,590.8 1174.5,596.6 1176.2,590.5 1177.7,597.0 1179.2,591.2 1180.4,596.9 1181.8,590.1 1182.9,597.6 1184.5,591.2 1185.6,598.3 1186.7,590.0 1187.8,597.4 1188.7,590.4 1189.9,597.6 1190.9,590.7 1192.6,598.5 1194.0,591.4 1195.4,596.8 1196.3,590.0 1197.9,597.9 1199.6,590.0 1201.0,597.5 1202.5,590.6 1204.2,596.7 1205.5,591.5 1207.1,598.0 1208.6,591.6 1210.2,597.2 1211.7,591.8 1213.3,597.3 1214.8,591.7 1216.2,597.7 1217.4,591.2 1218.8,596.7 1220.2,592.0 1221.8,598.0 1223.0,591.5 1224.3,597.4 1225.9,590.2 1227.4,596.6 1228.8,591.0 1229.9,597.9 1231.2,591.2 1232.8,597.0 1233.7,590.6 1235.2,596.9 1236.2,591.8 1237.6,597.4 1239.2,590.7 1240.7,596.9 1241.9,591.6 1243.6,598.3 1244.8,591.2 1245.7,591.1 1252.1,591.1 1253.6,586.4 1254.3,597.1 1255.7,591.1 1262.6,591.1 1263.3,597.1 1264.6,591.4 1266.4,587.9 1267.9,590.7 1269.3,591.4 1271.4,591.4 1272.9,582.9 1274.3,577.9 1276.0,582.1 1277.1,584.3 1278.6,582.1 1280.0,587.9 1281.1,585.7 1282.9,592.1 1284.3,587.1 1285.7,590.0 1286.9,584.3 1288.3,588.6 1289.7,583.6 1290.7,587.1 1292.1,574.3 1293.6,570.7 1295.0,573.6 1297.1,579.3 1299.3,584.3 1300.7,589.3 1301.7,585.7 1302.9,588.6 1304.3,585.7 1306.4,580.7 1307.9,577.9 1308.9,579.3 1310.0,575.7 1311.4,575.7 1312.6,572.1 1313.6,567.9 1315.0,565.7 1316.4,562.9 1317.9,565.7 1319.3,562.9 1320.7,565.7 1322.6,567.9 1324.3,570.0 1325.7,569.7 1327.1,575.0 1328.6,575.7 1329.7,573.6 1330.7,574.3 1332.1,580.7 1333.1,581.7 1334.6,582.1 1335.7,587.9 1337.1,582.1 1340.0,582.1 1341.4,589.3 1342.9,582.1 1345.0,582.1 1346.9,587.9 1348.6,585.7 1350.3,586.4 1351.4,582.9 1352.9,587.1 1354.3,590.7 1356.0,588.6 1357.9,590.7 1359.7,590.7 1361.1,582.9 1362.3,580.7 1363.6,586.4 1365.4,587.1 1366.9,582.9 1367.9,587.1 1369.3,580.7 1371.1,577.4 1372.6,578.9 1374.0,576.9 1375.7,577.1 1377.1,581.4 1378.3,583.6 1379.3,588.6 1380.3,592.9 1381.1,587.1 1382.6,586.4 1384.3,590.0 1385.7,591.1 1386.6,587.1 1387.4,582.9 1388.6,587.1 1390.0,591.1 1395.7,591.1 1396.9,590.0 1397.9,595.7 1398.9,587.1 1400.0,587.9 1401.1,591.1 1405.0,591.1 1406.4,600.0 1407.9,606.0 1920.0,606.0 1921.4,602.9 1922.9,595.7 1923.6,594.3 1924.6,597.1 1925.4,601.4 1929.3,601.4 1930.3,597.1 1931.4,602.1 1933.1,607.9 1934.6,600.0 1935.7,595.0 1936.9,594.3 1937.9,601.4 1938.5,592.4 1939.7,603.0 1941.2,594.1 1942.8,601.3 1943.8,593.4 1944.9,601.1 1946.1,593.9 1947.4,601.4 1948.8,594.9 1950.1,600.7 1951.0,594.6 1951.9,602.6 1953.2,592.9 1954.7,600.6 1955.7,593.4 1956.6,603.0 1957.6,592.4 1958.6,602.4 1959.8,593.9 1961.1,602.9 1962.7,594.1 1963.8,601.9 1964.8,592.0 1966.0,602.6 1967.0,592.8 1968.2,602.6 1969.4,593.8 1970.9,601.7 1972.3,591.8 1973.3,599.4 1974.7,590.3 1975.9,598.8 1977.4,590.8 1978.7,599.3 1980.2,591.9 1981.4,598.8 1982.5,591.4 1983.9,598.8 1985.3,590.4 1986.9,599.5 1988.5,591.1 1989.9,598.1 1991.5,591.7 1992.6,597.7 1993.8,591.1 1995.2,598.5 1996.2,591.6 1997.1,599.1 1998.1,590.7 1999.6,597.8 2000.6,591.0 2002.0,599.2 2003.4,591.9 2004.6,599.4 2005.6,590.4 2006.8,598.1 2008.3,591.3 2009.5,599.2 2011.4,591.1 2014.6,591.1 2016.0,598.6 2017.4,591.1 2020.2,591.1 2021.6,599.9 2023.0,591.1 2026.7,591.1 2028.1,598.3 2029.5,591.1 2033.0,591.1 2034.4,600.2 2035.8,591.1 2038.9,591.1 2040.3,599.2 2041.7,591.1 2044.2,591.1 2045.6,599.1 2047.0,591.1 2050.0,591.1 2051.4,599.3 2052.8,591.1 2055.0,591.1 2056.4,600.2 2057.8,591.1 2060.8,591.1 2062.2,598.8 2063.6,591.1 2067.1,591.1 2074.6,591.1 2075.7,584.6 2077.6,584.6 2078.6,591.1 2086.4,591.1 2087.4,599.3 2089.1,599.3 2090.0,591.1 2097.9,591.1 2098.6,583.6 2099.6,583.6 2100.0,595.7 2101.4,589.3 2102.9,583.6 2104.6,583.6 2106.0,592.9 2107.1,598.6 2108.6,590.0 2110.0,585.7 2111.1,589.3 2112.9,582.9 2114.3,582.9 2115.7,588.6 2117.1,592.9 2118.6,585.0 2120.0,590.0 2121.1,585.7 2122.1,590.7 2123.1,584.3 2124.3,585.7 2124.9,562.1 2126.3,562.1 2126.9,595.7 2127.7,582.9 2128.9,605.0 2129.7,587.1 2130.6,584.3 2131.4,591.1 2138.9,591.1 2139.7,583.6 2141.1,583.6 2142.0,602.9 2143.1,602.9 2144.3,591.1 2145.4,591.1 2146.4,583.6 2147.9,583.6 2149.3,591.1 2150.7,591.1 2152.1,599.3 2153.6,595.7 2155.4,591.1 2163.6,591.1 2164.5,584.7 2166.2,591.6 2167.5,584.6 2169.1,591.9 2171.2,584.3 2172.9,591.0 2174.5,585.0 2176.6,599.3 2178.1,599.3 2179.9,591.9 2181.3,584.9 2182.5,591.0 2183.9,584.8 2185.4,591.2 2187.3,584.1 2189.2,590.9 2190.9,584.3 2192.3,591.4 2193.9,584.5 2195.5,591.4 2196.9,584.2 2198.7,591.6 2200.5,585.0 2202.3,591.8 2203.7,584.9 2204.3,591.1 2210.3,591.1 2211.7,585.7 2212.9,597.1 2213.6,602.9 2214.7,591.1 2220.7,591.1 2221.7,600.0 2222.9,606.0 2572.5,606.2" fill="none" stroke="#9D248F" stroke-width="2.4" stroke-linejoin="round"/><polyline points="124.8,698.8 126.8,698.4 128.8,697.7 130.8,697.3 132.8,696.8 134.8,695.6 136.8,695.5 138.8,696.7 140.8,696.8 142.8,697.1 144.8,698.3 146.8,698.5 148.8,698.3 150.8,697.1 152.8,696.1 154.8,694.7 156.8,694.0 158.8,693.3 160.8,692.1 162.8,691.8 164.8,691.6 166.8,690.8 168.8,691.1 170.8,690.9 172.8,690.4 174.8,689.8 176.8,690.1 178.8,689.5 180.8,689.3 182.8,689.1 184.8,688.5 186.8,688.3 188.8,687.4 190.8,687.2 192.8,686.5 194.8,686.8 196.8,686.8 198.8,685.9 200.8,685.6 202.8,685.5 204.8,686.1 206.8,685.8 208.8,685.7 210.8,685.3 212.8,685.3 214.8,685.1 216.8,685.0 218.8,685.1 220.8,685.0 222.8,685.3 224.8,684.8 226.8,684.6 228.8,684.1 230.8,683.8 232.8,683.1 234.8,682.2 236.8,682.8 238.8,683.1 240.8,683.3 242.8,683.0 244.8,683.1 246.8,682.7 248.8,683.3 250.8,683.3 252.8,683.0 254.8,682.8 256.8,683.5 258.8,684.2 260.8,683.9 262.8,684.9 264.8,685.1 266.8,685.3 268.8,685.8 270.8,686.7 272.8,687.5 274.8,688.0 276.8,689.8 278.8,691.0 280.8,694.7 282.8,697.6 284.8,701.2 286.8,704.6 288.8,707.4 290.8,709.1 292.8,709.8 294.8,710.7 296.8,712.5 298.8,713.4 300.8,714.2 302.8,715.1 304.8,716.1 306.8,716.5 308.8,717.0 310.8,718.4 312.8,718.9 314.8,720.1 316.8,721.2 318.8,722.4 320.8,723.9 322.8,725.6 324.8,727.4 326.8,729.1 328.8,730.2 330.8,731.4 332.8,732.9 334.8,733.8 336.8,734.7 338.8,736.1 340.8,736.9 342.8,738.0 344.8,739.8 346.8,740.2 348.8,740.5 350.8,740.2 352.8,740.7 354.8,741.2 356.8,741.1 358.8,741.8 360.8,742.2 362.8,742.0 364.8,742.7 366.8,743.2 368.8,743.8 370.8,744.1 372.8,744.8 374.8,745.4 376.8,745.2 378.8,745.5 380.8,746.5 382.8,747.5 384.8,747.5 386.8,748.0 388.8,748.6 390.8,748.9 392.8,749.4 394.8,749.8 396.8,750.3 398.8,751.1 400.8,751.1 402.8,751.6 404.8,752.9 406.8,752.0 408.8,753.2 410.8,754.3 412.8,753.9 414.8,753.9 416.8,755.5 418.8,755.1 420.8,755.1 422.8,755.9 424.8,755.3 426.8,752.3 428.8,750.6 430.8,748.8 432.8,749.2 434.8,748.9 436.8,749.9 438.8,748.8 440.8,749.0 442.8,749.9 444.8,750.9 446.8,750.4 448.8,749.6 450.8,749.0 452.8,749.7 454.8,749.1 456.8,750.3 458.8,750.7 460.8,749.3 462.8,749.0 464.8,750.1 466.8,750.4 468.8,751.0 470.8,750.4 472.8,749.9 474.8,750.2 476.8,751.7 478.8,751.2 480.8,751.4 482.8,751.4 484.8,751.1 486.8,750.7 488.8,751.4 490.8,749.7 492.8,748.5 494.8,749.9 496.8,750.0 498.8,750.1 500.8,748.5 502.8,748.9 504.8,748.8 506.8,746.8 508.8,747.1 510.8,747.1 512.8,746.5 514.8,745.7 516.8,744.6 518.8,744.1 520.8,743.7 522.8,743.4 524.8,744.7 526.8,744.5 528.8,745.8 530.8,744.6 532.8,746.3 534.8,746.6 536.8,747.3 538.8,747.6 540.8,747.9 542.8,747.4 544.8,746.0 546.8,747.4 548.8,746.6 550.8,746.8 552.8,747.8 554.8,748.0 556.8,747.9 558.8,749.3 560.8,749.1 562.8,748.6 564.8,748.3 566.8,749.7 568.8,749.5 570.8,750.2 572.8,749.6 574.8,749.2 576.8,749.9 578.8,750.9 580.8,749.6 582.8,750.5 584.8,751.1 586.8,751.0 588.8,750.9 590.8,749.0 592.8,749.6 594.8,750.4 596.8,748.7 598.8,748.6 600.8,748.4 602.8,748.9 604.8,748.8 606.8,748.8 608.8,749.5 610.8,747.4 612.8,746.3 614.8,745.6 616.8,744.9 618.8,744.1 620.8,745.4 622.8,745.1 624.8,742.8 626.8,742.5 628.8,741.5 630.8,740.9 632.8,740.8 634.8,741.2 636.8,741.1 638.8,740.4 640.8,739.6 642.8,739.5 644.8,738.9 646.8,739.5 648.8,739.9 650.8,739.3 652.8,738.7 654.8,738.4 656.8,738.4 658.8,738.4 660.8,738.5 662.8,737.3 664.8,736.7 666.8,735.7 668.8,734.6 670.8,733.5 672.8,732.7 674.8,732.0 676.8,730.9 678.8,730.3 680.8,729.7 682.8,728.9 684.8,728.6 686.8,728.3 688.8,727.3 690.8,727.0 692.8,726.6 694.8,726.6 696.8,726.3 698.8,725.3 700.8,725.2 702.8,724.7 704.8,723.5 706.8,722.8 708.8,721.8 710.8,721.7 712.8,721.1 714.8,720.7 716.8,720.0 718.8,719.2 720.8,718.6 722.8,717.8 724.8,716.6 726.8,716.2 728.8,715.1 730.8,714.4 732.8,714.3 734.8,713.3 736.8,712.8 738.8,712.4 740.8,712.7 742.8,711.9 744.8,711.2 746.8,711.5 748.8,710.6 750.8,710.8 752.8,710.4 754.8,710.2 756.8,710.0 758.8,709.3 760.8,709.0 762.8,707.8 764.8,707.9 766.8,707.2 768.8,706.9 770.8,705.8 772.8,705.7 774.8,705.5 776.8,704.2 778.8,703.6 780.8,703.3 782.8,703.1 784.8,702.1 786.8,701.3 788.8,700.8 790.8,700.6 792.8,700.4 794.8,699.9 796.8,699.5 798.8,699.3 800.8,699.0 802.8,698.8 804.8,698.2 806.8,698.3 808.8,698.6 810.8,698.0 812.8,697.9 814.8,697.2 816.8,697.3 818.8,697.2 820.8,696.7 822.8,695.8 824.8,695.1 826.8,694.5 828.8,694.2 830.8,693.2 832.8,692.9 834.8,693.4 836.8,693.7 838.8,693.4 840.8,693.2 842.8,693.3 844.8,692.8 846.8,692.7 848.8,692.6 850.8,692.9 852.8,692.7 854.8,692.5 856.8,692.9 858.8,693.3 860.8,692.7 862.8,692.9 864.8,692.6 866.8,693.0 868.8,692.8 870.8,692.4 872.8,692.1 874.8,691.8 876.8,692.2 878.8,692.1 880.8,691.6 882.8,691.4 884.8,691.1 886.8,691.2 888.8,690.4 890.8,690.8 892.8,690.2 894.8,689.9 896.8,689.5 898.8,689.5 900.8,689.2 902.8,688.7 904.8,688.2 906.8,688.1 908.8,688.0 910.8,687.3 912.8,687.1 914.8,687.1 916.8,686.4 918.8,685.7 920.8,685.3 922.8,685.4 924.8,685.2 926.8,685.2 928.8,684.9 930.8,684.0 932.8,683.4 934.8,683.0 936.8,682.6 938.8,683.1 940.8,683.4 942.8,683.6 944.8,683.0 946.8,683.4 948.8,683.0 950.8,682.9 952.8,682.3 954.8,680.8 956.8,679.7 958.8,679.5 960.8,678.3 962.8,677.3 964.8,676.6 966.8,675.9 968.8,675.7 970.8,676.5 972.8,677.4 974.8,678.3 976.8,678.8 978.8,679.6 980.8,680.2 982.8,680.0 984.8,680.1 986.8,679.8 988.8,679.9 990.8,680.4 992.8,680.2 994.8,680.9 996.8,681.3 998.8,680.7 1000.8,681.4 1002.8,681.2 1004.8,681.6 1006.8,682.0 1008.8,682.3 1010.8,683.2 1012.8,683.9 1014.8,684.7 1016.8,684.9 1018.8,685.9 1020.8,686.9 1022.8,685.8 1024.8,684.2 1026.8,682.3 1028.8,681.0 1030.8,679.5 1032.8,678.5 1034.8,676.9 1036.8,675.1 1038.8,673.0 1040.8,671.7 1042.8,670.1 1044.8,668.0 1046.8,666.8 1048.8,665.1 1050.8,664.3 1052.8,664.7 1054.8,663.9 1056.8,663.6 1058.8,663.8 1060.8,663.6 1062.8,664.3 1064.8,665.2 1066.8,665.8 1068.8,666.4 1070.8,667.0 1072.8,667.6 1074.8,669.0 1076.8,670.0 1078.8,670.7 1080.8,671.7 1082.8,672.4 1084.8,673.4 1086.8,674.7 1088.8,676.5 1090.8,677.1 1092.8,678.5 1094.8,679.6 1096.8,681.3 1098.8,683.0 1100.8,684.8 1102.8,686.9 1104.8,689.0 1106.8,691.3 1108.8,693.0 1110.8,694.4 1112.8,694.7 1114.8,695.5 1116.8,696.2 1118.8,697.0 1120.8,698.5 1122.8,698.3 1124.8,697.2 1126.8,696.4 1128.8,695.9 1130.8,695.6 1132.8,695.2 1134.8,694.5 1136.8,694.8 1138.8,694.9 1140.8,695.5 1142.8,695.8 1144.8,696.7 1146.8,697.3 1148.8,697.6 1150.8,698.1 1152.8,699.1 1154.8,699.3 1156.8,701.1 1158.8,702.5 1160.8,704.4 1162.8,704.5 1164.8,705.7 1166.8,706.9 1168.8,708.8 1170.8,711.9 1172.8,713.9 1174.8,714.9 1176.8,715.2 1178.8,714.1 1180.8,713.6 1182.8,714.4 1184.8,714.1 1186.8,716.5 1188.8,717.9 1190.8,718.8 1192.8,719.1 1194.8,718.5 1196.8,717.3 1198.8,717.3 1200.8,715.9 1202.8,716.1 1204.8,716.2 1206.8,716.5 1208.8,718.0 1210.8,720.3 1212.8,721.9 1214.8,721.5 1216.8,723.1 1218.8,722.6 1220.8,720.9 1222.8,720.7 1224.8,720.1 1226.8,719.3 1228.8,719.8 1230.8,720.6 1232.8,719.2 1234.8,720.7 1236.8,721.4 1238.8,720.9 1240.8,722.9 1242.8,723.6 1244.8,725.4 1246.8,726.2 1248.8,727.2 1250.8,727.3 1252.8,729.0 1254.8,730.2 1256.8,730.5 1258.8,729.8 1260.8,730.5 1262.8,730.3 1264.8,729.9 1266.8,730.9 1268.8,732.4 1270.8,734.1 1272.8,735.7 1274.8,737.6 1276.8,737.4 1278.8,736.3 1280.8,735.0 1282.8,734.4 1284.8,732.7 1286.8,734.7 1288.8,737.3 1290.8,738.7 1292.8,739.9 1294.8,742.7 1296.8,740.5 1298.8,737.5 1300.8,735.6 1302.8,736.8 1304.8,737.9 1306.8,738.0 1308.8,738.1 1310.8,739.1 1312.8,741.2 1314.8,740.1 1316.8,740.5 1318.8,739.9 1320.8,739.7 1322.8,739.5 1324.8,739.1 1326.8,737.8 1328.8,736.5 1330.8,735.6 1332.8,734.9 1334.8,734.8 1336.8,733.2 1338.8,732.2 1340.8,732.9 1342.8,732.9 1344.8,733.6 1346.8,732.2 1348.8,732.4 1350.8,732.4 1352.8,731.4 1354.8,733.1 1356.8,731.9 1358.8,731.9 1360.8,733.4 1362.8,733.8 1364.8,735.5 1366.8,736.0 1368.8,736.2 1370.8,736.7 1372.8,738.9 1374.8,737.5 1376.8,737.6 1378.8,736.3 1380.8,736.4 1382.8,734.4 1384.8,733.0 1386.8,732.0 1388.8,732.3 1390.8,731.5 1392.8,730.6 1394.8,730.0 1396.8,731.4 1398.8,732.7 1400.8,732.5 1402.8,731.2 1404.8,731.0 1406.8,731.3 1408.8,731.7 1410.8,730.8 1412.8,729.9 1414.8,730.5 1416.8,730.7 1418.8,728.7 1420.8,728.6 1422.8,727.6 1424.8,727.0 1426.8,726.6 1428.8,726.3 1430.8,725.1 1432.8,724.8 1434.8,724.7 1436.8,724.9 1438.8,723.8 1440.8,723.5 1442.8,723.7 1444.8,722.8 1446.8,722.6 1448.8,722.2 1450.8,722.2 1452.8,722.3 1454.8,721.4 1456.8,721.5 1458.8,721.4 1460.8,721.4 1462.8,721.0 1464.8,721.0 1466.8,720.4 1468.8,720.1 1470.8,719.6 1472.8,719.9 1474.8,719.6 1476.8,719.1 1478.8,718.7 1480.8,719.0 1482.8,718.9 1484.8,718.8 1486.8,717.8 1488.8,717.2 1490.8,716.2 1492.8,715.9 1494.8,714.7 1496.8,714.3 1498.8,714.0 1500.8,713.4 1502.8,712.2 1504.8,711.5 1506.8,711.4 1508.8,710.7 1510.8,710.3 1512.8,709.7 1514.8,708.7 1516.8,708.3 1518.8,707.6 1520.8,706.5 1522.8,705.7 1524.8,704.7 1526.8,704.4 1528.8,704.8 1530.8,703.9 1532.8,703.9 1534.8,703.2 1536.8,702.8 1538.8,703.1 1540.8,702.6 1542.8,702.0 1544.8,701.8 1546.8,702.0 1548.8,701.9 1550.8,701.1 1552.8,700.9 1554.8,701.4 1556.8,700.6 1558.8,700.5 1560.8,700.1 1562.8,699.8 1564.8,699.1 1566.8,698.6 1568.8,697.7 1570.8,696.6 1572.8,695.8 1574.8,695.0 1576.8,695.0 1578.8,693.9 1580.8,692.9 1582.8,693.3 1584.8,692.3 1586.8,692.4 1588.8,691.3 1590.8,691.0 1592.8,690.3 1594.8,690.4 1596.8,689.9 1598.8,689.5 1600.8,689.1 1602.8,688.8 1604.8,687.9 1606.8,687.5 1608.8,686.9 1610.8,686.1 1612.8,686.5 1614.8,686.3 1616.8,686.3 1618.8,685.6 1620.8,685.5 1622.8,685.3 1624.8,685.4 1626.8,684.7 1628.8,684.6 1630.8,684.5 1632.8,684.0 1634.8,684.2 1636.8,684.3 1638.8,683.9 1640.8,683.9 1642.8,683.7 1644.8,683.1 1646.8,682.9 1648.8,683.4 1650.8,682.8 1652.8,682.5 1654.8,682.0 1656.8,681.8 1658.8,681.6 1660.8,682.1 1662.8,682.0 1664.8,682.0 1666.8,682.0 1668.8,681.5 1670.8,681.5 1672.8,681.0 1674.8,680.6 1676.8,680.9 1678.8,680.8 1680.8,680.7 1682.8,680.1 1684.8,680.0 1686.8,679.5 1688.8,679.8 1690.8,679.7 1692.8,679.0 1694.8,679.2 1696.8,678.5 1698.8,678.0 1700.8,678.3 1702.8,677.9 1704.8,677.9 1706.8,677.9 1708.8,677.2 1710.8,677.5 1712.8,677.0 1714.8,676.9 1716.8,676.7 1718.8,676.9 1720.8,676.8 1722.8,676.3 1724.8,675.8 1726.8,675.7 1728.8,675.6 1730.8,675.2 1732.8,675.0 1734.8,675.4 1736.8,675.4 1738.8,675.5 1740.8,675.5 1742.8,675.2 1744.8,674.5 1746.8,674.0 1748.8,673.8 1750.8,673.8 1752.8,673.7 1754.8,673.6 1756.8,673.1 1758.8,673.0 1760.8,672.2 1762.8,671.7 1764.8,671.7 1766.8,671.3 1768.8,670.4 1770.8,669.7 1772.8,669.7 1774.8,668.6 1776.8,668.1 1778.8,668.1 1780.8,668.3 1782.8,668.1 1784.8,667.9 1786.8,668.1 1788.8,668.8 1790.8,668.8 1792.8,669.3 1794.8,669.4 1796.8,669.7 1798.8,668.9 1800.8,668.8 1802.8,668.7 1804.8,668.5 1806.8,668.0 1808.8,667.2 1810.8,667.1 1812.8,666.3 1814.8,665.9 1816.8,665.3 1818.8,665.3 1820.8,664.8 1822.8,666.1 1824.8,667.3 1826.8,669.0 1828.8,670.8 1830.8,672.5 1832.8,674.2 1834.8,675.7 1836.8,676.6 1838.8,677.2 1840.8,677.1 1842.8,676.6 1844.8,675.8 1846.8,675.4 1848.8,674.6 1850.8,673.6 1852.8,672.7 1854.8,671.8 1856.8,671.8 1858.8,671.6 1860.8,671.1 1862.8,670.1 1864.8,669.6 1866.8,671.1 1868.8,672.2 1870.8,673.2 1872.8,674.2 1874.8,674.6 1876.8,674.3 1878.8,674.2 1880.8,674.6 1882.8,675.1 1884.8,674.8 1886.8,674.6 1888.8,674.4 1890.8,674.5 1892.8,674.9 1894.8,674.6 1896.8,675.1 1898.8,674.4 1900.8,674.3 1902.8,674.5 1904.8,674.5 1906.8,674.9 1908.8,675.8 1910.8,676.8 1912.8,677.4 1914.8,677.6 1916.8,678.8 1918.8,679.7 1920.8,680.6 1922.8,681.2 1924.8,682.5 1926.8,683.6 1928.8,683.1 1930.8,683.7 1932.8,683.8 1934.8,684.1 1936.8,684.8 1938.8,685.3 1940.8,685.3 1942.8,685.1 1944.8,685.9 1946.8,685.6 1948.8,686.1 1950.8,687.4 1952.8,687.8 1954.8,688.4 1956.8,689.7 1958.8,690.7 1960.8,690.9 1962.8,691.6 1964.8,692.2 1966.8,692.8 1968.8,693.6 1970.8,695.2 1972.8,695.4 1974.8,696.3 1976.8,697.1 1978.8,697.8 1980.8,699.1 1982.8,700.3 1984.8,701.4 1986.8,702.0 1988.8,702.0 1990.8,700.4 1992.8,700.4 1994.8,701.9 1996.8,700.3 1998.8,700.1 2000.8,700.5 2002.8,701.2 2004.8,702.8 2006.8,702.8 2008.8,703.9 2010.8,706.7 2012.8,706.4 2014.8,707.9 2016.8,706.8 2018.8,708.3 2020.8,708.2 2022.8,708.1 2024.8,707.0 2026.8,706.5 2028.8,708.0 2030.8,707.2 2032.8,707.0 2034.8,708.5 2036.8,709.4 2038.8,708.3 2040.8,710.4 2042.8,710.6 2044.8,710.7 2046.8,710.4 2048.8,711.4 2050.8,713.2 2052.8,711.9 2054.8,711.0 2056.8,710.5 2058.8,710.2 2060.8,710.6 2062.8,713.0 2064.8,712.5 2066.8,713.1 2068.8,715.7 2070.8,717.3 2072.8,718.4 2074.8,717.6 2076.8,716.4 2078.8,716.8 2080.8,715.3 2082.8,714.7 2084.8,713.0 2086.8,712.8 2088.8,714.5 2090.8,716.8 2092.8,718.5 2094.8,719.4 2096.8,720.3 2098.8,721.6 2100.8,722.6 2102.8,723.2 2104.8,724.2 2106.8,723.3 2108.8,724.1 2110.8,725.3 2112.8,725.7 2114.8,724.5 2116.8,726.1 2118.8,726.5 2120.8,723.9 2122.8,722.5 2124.8,721.1 2126.8,719.5 2128.8,720.3 2130.8,718.6 2132.8,720.5 2134.8,720.7 2136.8,721.5 2138.8,724.2 2140.8,723.9 2142.8,723.7 2144.8,722.5 2146.8,721.2 2148.8,720.8 2150.8,718.8 2152.8,720.2 2154.8,720.9 2156.8,721.0 2158.8,722.6 2160.8,723.1 2162.8,724.2 2164.8,724.8 2166.8,725.2 2168.8,725.3 2170.8,726.0 2172.8,727.1 2174.8,727.5 2176.8,727.5 2178.8,727.5 2180.8,726.3 2182.8,727.5 2184.8,726.5 2186.8,726.1 2188.8,727.2 2190.8,728.4 2192.8,728.2 2194.8,729.1 2196.8,728.9 2198.8,730.7 2200.8,730.0 2202.8,729.2 2204.8,728.7 2206.8,728.9 2208.8,728.9 2210.8,727.4 2212.8,726.4 2214.8,726.0 2216.8,724.5 2218.8,725.0 2220.8,726.2 2222.8,726.5 2224.8,724.9 2226.8,726.3 2228.8,725.7 2230.8,726.9 2232.8,725.9 2234.8,725.3 2236.8,725.9 2238.8,726.9 2240.8,726.2 2242.8,727.0 2244.8,727.0 2246.8,726.2 2248.8,725.8 2250.8,726.2 2252.8,726.1 2254.8,726.1 2256.8,726.2 2258.8,726.4 2260.8,725.4 2262.8,724.2 2264.8,723.6 2266.8,723.2 2268.8,723.0 2270.8,722.1 2272.8,721.4 2274.8,721.1 2276.8,720.8 2278.8,720.5 2280.8,720.9 2282.8,721.4 2284.8,721.1 2286.8,721.2 2288.8,721.3 2290.8,721.3 2292.8,721.4 2294.8,720.9 2296.8,720.9 2298.8,720.4 2300.8,720.9 2302.8,720.6 2304.8,720.5 2306.8,720.9 2308.8,720.1 2310.8,719.5 2312.8,719.6 2314.8,719.1 2316.8,718.2 2318.8,717.5 2320.8,717.3 2322.8,716.6 2324.8,716.9 2326.8,716.1 2328.8,715.6 2330.8,715.3 2332.8,715.0 2334.8,714.7 2336.8,714.6 2338.8,714.3 2340.8,713.8 2342.8,713.1 2344.8,713.5 2346.8,713.2 2348.8,712.2 2350.8,712.1 2352.8,712.1 2354.8,712.1 2356.8,711.0 2358.8,710.4 2360.8,710.4 2362.8,710.1 2364.8,710.3 2366.8,710.1 2368.8,709.7 2370.8,709.9 2372.8,710.4 2374.8,711.0 2376.8,710.8 2378.8,711.1 2380.8,711.1 2382.8,711.8 2384.8,711.7 2386.8,712.7 2388.8,712.9 2390.8,713.1 2392.8,712.4 2394.8,712.1 2396.8,712.0 2398.8,712.2 2400.8,711.8 2402.8,711.2 2404.8,711.5 2406.8,711.1 2408.8,710.6 2410.8,710.0 2412.8,709.6 2414.8,709.9 2416.8,709.1 2418.8,709.0 2420.8,708.9 2422.8,708.4 2424.8,708.4 2426.8,708.4 2428.8,708.1 2430.8,707.7 2432.8,706.8 2434.8,706.2 2436.8,706.2 2438.8,705.8 2440.8,705.4 2442.8,705.7 2444.8,705.0 2446.8,705.1 2448.8,705.1 2450.8,704.1 2452.8,704.3 2454.8,703.7 2456.8,703.1 2458.8,702.7 2460.8,702.2 2462.8,702.2 2464.8,702.0 2466.8,702.1 2468.8,702.0 2470.8,700.9 2472.8,700.7 2474.8,700.4 2476.8,699.9 2478.8,699.6 2480.8,699.3 2482.8,699.4 2484.8,698.9 2486.8,698.3 2488.8,698.0 2490.8,697.9 2492.8,697.8 2494.8,697.3 2496.8,697.2 2498.8,696.3 2500.8,696.2 2502.8,695.8 2504.8,694.9 2506.8,694.9 2508.8,694.2 2510.8,693.8 2512.8,693.4 2514.8,693.0 2516.8,692.4 2518.8,691.5 2520.8,691.6 2522.8,691.4 2524.8,690.6 2526.8,690.2 2528.8,689.5 2530.8,689.6 2532.8,689.2 2534.8,688.4 2536.8,688.4 2538.8,688.4 2540.8,687.5 2542.8,687.5 2544.8,686.8 2546.8,686.0 2548.8,686.0 2550.8,685.4 2552.8,685.3 2554.8,684.9 2556.8,684.0 2558.8,684.0 2560.8,684.1 2562.8,683.6 2564.8,683.4 2566.8,683.4 2568.8,682.9 2570.8,682.6" fill="none" stroke="#CE561B" stroke-width="2.5" stroke-linejoin="round"/><polyline points="124.8,902.3 126.6,903.4 128.4,904.3 130.2,905.4 132.0,903.8 133.8,902.4 135.6,899.5 137.4,899.2 139.2,900.7 141.0,901.2 142.8,902.2 144.6,901.8 146.4,902.7 148.2,903.1 150.0,904.1 151.8,904.4 153.6,903.1 155.4,902.6 157.2,902.1 159.0,902.5 160.8,902.1 162.6,900.6 164.4,901.6 166.2,901.4 168.0,902.4 169.8,902.4 171.6,902.6 173.4,904.3 175.2,904.3 177.0,904.1 178.8,905.2 180.6,905.5 182.4,904.8 184.2,905.5 186.0,905.2 187.8,905.3 189.6,904.7 191.4,905.6 193.2,905.6 195.0,906.0 196.8,906.1 198.6,905.3 200.4,905.3 202.2,905.2 204.0,905.4 205.8,905.5 207.6,906.1 209.4,906.9 211.2,905.9 213.0,906.3 214.8,905.7 216.6,905.2 218.4,905.7 220.2,906.0 222.0,906.2 223.8,906.9 225.6,907.8 227.4,907.5 229.2,909.1 231.0,907.7 232.8,907.7 234.6,907.4 236.4,905.7 238.2,905.8 240.0,904.7 241.8,904.4 243.6,903.2 245.4,902.6 247.2,902.3 249.0,903.1 250.8,902.0 252.6,902.2 254.4,902.3 256.2,902.0 258.0,900.3 259.8,899.1 261.6,898.3 263.4,897.8 265.2,896.0 267.0,895.8 268.8,894.7 270.6,892.6 272.4,889.2 274.2,887.9 276.0,883.5 277.8,879.1 279.6,875.0 281.4,871.1 283.2,867.5 285.0,865.9 286.8,863.3 288.6,860.6 290.4,859.1 292.2,857.7 294.0,856.2 295.8,855.0 297.6,854.6 299.4,854.3 301.2,852.5 303.0,851.2 304.8,851.7 306.6,850.6 308.4,849.6 310.2,848.5 312.0,847.4 313.8,845.4 315.6,842.6 317.4,840.0 319.2,838.0 321.0,838.5 322.8,836.8 324.6,836.5 326.4,836.5 328.2,835.0 330.0,835.3 331.8,835.4 333.6,833.7 335.4,832.9 337.2,829.8 339.0,829.1 340.8,827.3 342.6,828.7 344.4,829.2 346.2,830.9 348.0,833.6 349.8,833.3 351.6,833.3 353.4,831.3 355.2,830.5 357.0,830.6 358.8,829.6 360.6,828.4 362.4,827.9 364.2,826.6 366.0,826.6 367.8,828.2 369.6,828.3 371.4,827.0 373.2,825.7 375.0,825.0 376.8,823.9 378.6,824.1 380.4,825.8 382.2,826.7 384.0,825.4 385.8,829.5 387.6,837.0 389.4,835.0 391.2,833.1 393.0,831.5 394.8,828.6 396.6,829.2 398.4,829.6 400.2,831.4 402.0,833.9 403.8,835.5 405.6,835.7 407.4,837.4 409.2,836.7 411.0,836.0 412.8,833.7 414.6,834.3 416.4,834.7 418.2,836.7 420.0,837.3 421.8,840.2 423.6,845.9 425.4,852.7 427.2,856.6 429.0,859.8 430.8,856.8 432.6,853.7 434.4,849.2 436.2,850.4 438.0,850.6 439.8,849.3 441.6,850.0 443.4,850.1 445.2,847.8 447.0,846.9 448.8,844.7 450.6,847.3 452.4,852.2 454.2,854.2 456.0,858.3 457.8,858.3 459.6,858.2 461.4,855.1 463.2,856.9 465.0,856.3 466.8,856.2 468.6,854.0 470.4,853.6 472.2,853.6 474.0,852.2 475.8,851.5 477.6,847.0 479.4,847.9 481.2,852.3 483.0,857.0 484.8,858.5 486.6,860.1 488.4,859.2 490.2,855.1 492.0,858.2 493.8,859.6 495.6,860.7 497.4,862.6 499.2,862.0 501.0,860.1 502.8,858.5 504.6,856.1 506.4,856.5 508.2,855.2 510.0,856.6 511.8,859.8 513.6,861.0 515.4,866.7 517.2,865.9 519.0,866.1 520.8,862.6 522.6,860.1 524.4,855.7 526.2,855.8 528.0,854.3 529.8,852.5 531.6,855.2 533.4,853.7 535.2,855.8 537.0,855.9 538.8,857.4 540.6,860.3 542.4,860.9 544.2,859.5 546.0,861.8 547.8,862.5 549.6,861.9 551.4,861.2 553.2,864.0 555.0,865.5 556.8,868.7 558.6,869.7 560.4,867.7 562.2,865.3 564.0,867.0 565.8,862.6 567.6,861.3 569.4,862.8 571.2,863.2 573.0,860.5 574.8,861.7 576.6,863.1 578.4,860.7 580.2,862.1 582.0,862.7 583.8,864.4 585.6,869.8 587.4,869.5 589.2,872.9 591.0,874.5 592.8,874.0 594.6,872.8 596.4,876.8 598.2,875.4 600.0,873.9 601.8,872.5 603.6,875.2 605.4,873.2 607.2,871.0 609.0,870.9 610.8,868.7 612.6,870.1 614.4,869.3 616.2,868.0 618.0,871.1 619.8,873.0 621.6,870.0 623.4,872.3 625.2,872.3 627.0,876.3 628.8,877.5 630.6,875.6 632.4,875.2 634.2,874.7 636.0,879.2 637.8,877.4 639.6,878.7 641.4,878.9 643.2,879.4 645.0,879.9 646.8,880.5 648.6,880.1 650.4,881.2 652.2,881.1 654.0,881.8 655.8,882.0 657.6,883.0 659.4,884.5 661.2,885.6 663.0,886.6 664.8,888.3 666.6,889.4 668.4,889.7 670.2,890.9 672.0,892.0 673.8,893.0 675.6,893.4 677.4,893.2 679.2,892.5 681.0,893.5 682.8,893.4 684.6,893.8 686.4,894.2 688.2,894.4 690.0,894.3 691.8,894.5 693.6,893.5 695.4,892.9 697.2,893.1 699.0,891.9 700.8,891.3 702.6,891.6 704.4,890.3 706.2,890.7 708.0,890.4 709.8,889.6 711.6,888.8 713.4,889.0 715.2,888.9 717.0,887.5 718.8,887.2 720.6,886.9 722.4,886.5 724.2,885.5 726.0,884.2 727.8,883.8 729.6,883.5 731.4,881.6 733.2,880.6 735.0,880.6 736.8,880.0 738.6,879.8 740.4,878.6 742.2,879.2 744.0,879.7 745.8,879.8 747.6,879.3 749.4,878.1 751.2,878.8 753.0,878.0 754.8,878.3 756.6,878.8 758.4,878.5 760.2,877.4 762.0,877.5 763.8,878.8 765.6,878.3 767.4,879.1 769.2,879.3 771.0,879.2 772.8,880.1 774.6,879.8 776.4,880.0 778.2,880.7 780.0,880.8 781.8,880.9 783.6,881.5 785.4,881.8 787.2,882.0 789.0,880.9 790.8,880.8 792.6,880.5 794.4,880.8 796.2,880.6 798.0,881.1 799.8,880.3 801.6,879.5 803.4,880.0 805.2,879.3 807.0,879.7 808.8,879.5 810.6,880.3 812.4,880.2 814.2,880.4 816.0,880.1 817.8,880.6 819.6,880.5 821.4,881.3 823.2,881.4 825.0,881.1 826.8,881.2 828.6,881.7 830.4,882.4 832.2,881.8 834.0,882.3 835.8,882.4 837.6,881.5 839.4,882.1 841.2,881.4 843.0,881.2 844.8,881.8 846.6,881.4 848.4,882.2 850.2,881.9 852.0,881.5 853.8,882.1 855.6,881.1 857.4,881.8 859.2,881.0 861.0,880.8 862.8,881.9 864.6,881.9 866.4,881.2 868.2,880.7 870.0,881.8 871.8,881.7 873.6,881.9 875.4,880.9 877.2,881.3 879.0,881.0 880.8,880.6 882.6,880.6 884.4,881.0 886.2,880.7 888.0,880.7 889.8,880.2 891.6,881.1 893.4,881.1 895.2,881.3 897.0,880.8 898.8,881.2 900.6,880.8 902.4,880.7 904.2,880.6 906.0,880.8 907.8,880.3 909.6,879.7 911.4,879.3 913.2,879.4 915.0,879.2 916.8,880.4 918.6,880.1 920.4,880.4 922.2,879.4 924.0,879.7 925.8,880.4 927.6,880.2 929.4,879.8 931.2,879.7 933.0,879.0 934.8,878.9 936.6,878.8 938.4,879.1 940.2,879.1 942.0,879.9 943.8,879.0 945.6,878.8 947.4,878.8 949.2,878.5 951.0,878.6 952.8,878.5 954.6,878.8 956.4,878.2 958.2,879.3 960.0,878.8 961.8,879.5 963.6,879.3 965.4,879.2 967.2,878.8 969.0,879.4 970.8,878.3 972.6,878.7 974.4,878.2 976.2,878.6 978.0,878.8 979.8,878.1 981.6,877.8 983.4,877.5 985.2,877.7 987.0,877.5 988.8,878.0 990.6,879.0 992.4,878.4 994.2,878.1 996.0,878.3 997.8,878.0 999.6,878.6 1001.4,878.1 1003.2,875.6 1005.0,873.8 1006.8,872.6 1008.6,872.7 1010.4,872.7 1012.2,872.5 1014.0,873.3 1015.8,872.3 1017.6,872.2 1019.4,873.3 1021.2,873.3 1023.0,872.9 1024.8,872.9 1026.6,873.2 1028.4,872.2 1030.2,871.3 1032.0,870.2 1033.8,869.4 1035.6,870.0 1037.4,869.3 1039.2,869.3 1041.0,867.7 1042.8,867.0 1044.6,866.1 1046.4,866.0 1048.2,865.1 1050.0,864.8 1051.8,864.8 1053.6,864.4 1055.4,863.7 1057.2,863.2 1059.0,864.2 1060.8,863.2 1062.6,863.1 1064.4,862.7 1066.2,863.6 1068.0,863.6 1069.8,864.4 1071.6,864.8 1073.4,866.0 1075.2,867.4 1077.0,867.8 1078.8,868.7 1080.6,868.5 1082.4,868.5 1084.2,869.7 1086.0,870.4 1087.8,871.1 1089.6,871.5 1091.4,870.5 1093.2,868.5 1095.0,866.6 1096.8,863.5 1098.6,861.2 1100.4,860.0 1102.2,858.6 1104.0,858.1 1105.8,858.7 1107.6,858.5 1109.4,860.6 1111.2,860.4 1113.0,858.0 1114.8,855.9 1116.6,854.3 1118.4,854.6 1120.2,856.1 1122.0,859.0 1123.8,861.8 1125.6,863.0 1127.4,862.7 1129.2,864.0 1131.0,862.1 1132.8,861.6 1134.6,861.4 1136.4,861.4 1138.2,860.2 1140.0,860.5 1141.8,860.0 1143.6,861.0 1145.4,860.4 1147.2,861.0 1149.0,860.1 1150.8,859.8 1152.6,858.4 1154.4,856.9 1156.2,857.0 1158.0,855.9 1159.8,855.9 1161.6,855.0 1163.4,854.0 1165.2,850.1 1167.0,849.9 1168.8,846.1 1170.6,842.0 1172.4,841.7 1174.2,843.9 1176.0,846.4 1177.8,850.7 1179.6,848.4 1181.4,845.2 1183.2,846.7 1185.0,845.1 1186.8,840.7 1188.6,838.6 1190.4,840.1 1192.2,842.7 1194.0,847.1 1195.8,850.1 1197.6,850.3 1199.4,849.3 1201.2,850.8 1203.0,852.0 1204.8,851.1 1206.6,846.6 1208.4,846.3 1210.2,845.7 1212.0,843.2 1213.8,837.3 1215.6,839.1 1217.4,839.4 1219.2,843.5 1221.0,844.7 1222.8,848.9 1224.6,848.1 1226.4,843.6 1228.2,842.4 1230.0,844.5 1231.8,842.2 1233.6,840.6 1235.4,839.4 1237.2,841.6 1239.0,846.9 1240.8,849.1 1242.6,851.7 1244.4,847.5 1246.2,841.6 1248.0,841.4 1249.8,837.3 1251.6,836.8 1253.4,845.0 1255.2,845.6 1257.0,851.4 1258.8,855.6 1260.6,855.7 1262.4,850.9 1264.2,846.4 1266.0,843.2 1267.8,839.7 1269.6,838.4 1271.4,835.9 1273.2,840.2 1275.0,840.6 1276.8,842.9 1278.6,844.7 1280.4,850.7 1282.2,851.2 1284.0,848.1 1285.8,843.6 1287.6,838.7 1289.4,833.5 1291.2,833.7 1293.0,838.5 1294.8,841.4 1296.6,846.6 1298.4,845.3 1300.2,846.1 1302.0,845.9 1303.8,840.6 1305.6,840.4 1307.4,836.5 1309.2,836.8 1311.0,837.1 1312.8,835.3 1314.6,835.0 1316.4,832.0 1318.2,829.1 1320.0,831.8 1321.8,833.9 1323.6,833.2 1325.4,834.8 1327.2,836.8 1329.0,838.3 1330.8,842.4 1332.6,846.2 1334.4,845.5 1336.2,843.5 1338.0,839.1 1339.8,842.1 1341.6,843.1 1343.4,844.7 1345.2,844.7 1347.0,845.3 1348.8,845.4 1350.6,847.5 1352.4,846.6 1354.2,847.2 1356.0,845.2 1357.8,841.9 1359.6,837.7 1361.4,834.5 1363.2,833.9 1365.0,835.0 1366.8,836.5 1368.6,837.9 1370.4,838.1 1372.2,836.0 1374.0,841.0 1375.8,842.1 1377.6,847.1 1379.4,844.9 1381.2,847.6 1383.0,848.2 1384.8,850.0 1386.6,850.4 1388.4,849.5 1390.2,850.1 1392.0,849.8 1393.8,848.6 1395.6,845.7 1397.4,846.1 1399.2,847.9 1401.0,845.8 1402.8,845.9 1404.6,844.9 1406.4,844.1 1408.2,844.3 1410.0,846.4 1411.8,848.1 1413.6,850.6 1415.4,853.1 1417.2,855.1 1419.0,855.3 1420.8,855.2 1422.6,854.9 1424.4,855.8 1426.2,856.2 1428.0,856.7 1429.8,856.6 1431.6,857.5 1433.4,857.0 1435.2,857.1 1437.0,857.3 1438.8,858.1 1440.6,859.0 1442.4,858.4 1444.2,859.1 1446.0,859.3 1447.8,858.2 1449.6,857.2 1451.4,857.3 1453.2,857.5 1455.0,857.3 1456.8,856.7 1458.6,856.1 1460.4,855.9 1462.2,855.9 1464.0,856.5 1465.8,855.8 1467.6,855.5 1469.4,855.8 1471.2,856.5 1473.0,855.5 1474.8,854.9 1476.6,854.8 1478.4,855.4 1480.2,855.7 1482.0,855.1 1483.8,854.9 1485.6,855.4 1487.4,855.7 1489.2,855.8 1491.0,855.9 1492.8,854.9 1494.6,855.1 1496.4,856.0 1498.2,856.6 1500.0,856.0 1501.8,856.8 1503.6,856.9 1505.4,857.5 1507.2,856.8 1509.0,857.4 1510.8,858.0 1512.6,857.9 1514.4,857.4 1516.2,857.4 1518.0,857.0 1519.8,856.5 1521.6,856.3 1523.4,856.7 1525.2,855.9 1527.0,856.4 1528.8,856.3 1530.6,856.2 1532.4,856.0 1534.2,855.6 1536.0,855.5 1537.8,855.6 1539.6,855.1 1541.4,855.4 1543.2,854.1 1545.0,853.7 1546.8,853.4 1548.6,853.5 1550.4,853.7 1552.2,853.9 1554.0,854.3 1555.8,854.4 1557.6,853.5 1559.4,853.6 1561.2,853.8 1563.0,853.6 1564.8,853.1 1566.6,853.6 1568.4,853.2 1570.2,853.2 1572.0,852.7 1573.8,852.9 1575.6,852.7 1577.4,851.1 1579.2,851.3 1581.0,851.1 1582.8,850.1 1584.6,849.2 1586.4,849.2 1588.2,849.9 1590.0,851.1 1591.8,852.3 1593.6,852.3 1595.4,852.6 1597.2,853.5 1599.0,854.5 1600.8,855.5 1602.6,855.7 1604.4,855.3 1606.2,855.4 1608.0,856.2 1609.8,856.1 1611.6,855.5 1613.4,855.8 1615.2,855.7 1617.0,856.4 1618.8,855.8 1620.6,855.9 1622.4,855.8 1624.2,856.3 1626.0,857.4 1627.8,857.1 1629.6,856.8 1631.4,857.6 1633.2,856.7 1635.0,856.8 1636.8,857.6 1638.6,856.7 1640.4,857.6 1642.2,857.3 1644.0,856.8 1645.8,857.0 1647.6,857.4 1649.4,857.5 1651.2,857.8 1653.0,857.3 1654.8,857.4 1656.6,858.6 1658.4,858.3 1660.2,858.3 1662.0,857.8 1663.8,857.9 1665.6,859.1 1667.4,859.1 1669.2,858.9 1671.0,858.2 1672.8,858.5 1674.6,859.3 1676.4,859.1 1678.2,859.3 1680.0,859.9 1681.8,859.8 1683.6,859.8 1685.4,858.9 1687.2,858.6 1689.0,859.5 1690.8,859.3 1692.6,859.8 1694.4,859.9 1696.2,860.0 1698.0,859.2 1699.8,859.8 1701.6,859.6 1703.4,859.7 1705.2,858.6 1707.0,859.1 1708.8,858.7 1710.6,859.3 1712.4,859.5 1714.2,858.4 1716.0,858.2 1717.8,857.9 1719.6,858.1 1721.4,857.8 1723.2,858.2 1725.0,857.5 1726.8,857.3 1728.6,857.6 1730.4,857.1 1732.2,857.3 1734.0,858.1 1735.8,858.3 1737.6,857.3 1739.4,856.7 1741.2,857.6 1743.0,858.1 1744.8,857.7 1746.6,856.8 1748.4,856.6 1750.2,857.5 1752.0,857.7 1753.8,856.3 1755.6,856.0 1757.4,856.2 1759.2,855.9 1761.0,856.4 1762.8,855.9 1764.6,856.3 1766.4,855.4 1768.2,855.5 1770.0,856.2 1771.8,855.9 1773.6,854.8 1775.4,854.4 1777.2,854.9 1779.0,854.6 1780.8,854.4 1782.6,854.6 1784.4,855.1 1786.2,856.1 1788.0,855.5 1789.8,856.0 1791.6,855.9 1793.4,856.5 1795.2,857.2 1797.0,856.7 1798.8,857.2 1800.6,858.0 1802.4,857.4 1804.2,858.6 1806.0,858.7 1807.8,859.2 1809.6,859.8 1811.4,860.5 1813.2,859.9 1815.0,860.6 1816.8,860.4 1818.6,861.2 1820.4,860.4 1822.2,858.9 1824.0,858.2 1825.8,857.5 1827.6,856.9 1829.4,856.5 1831.2,854.8 1833.0,853.8 1834.8,853.2 1836.6,855.1 1838.4,856.6 1840.2,858.1 1842.0,858.5 1843.8,858.6 1845.6,859.8 1847.4,859.2 1849.2,859.7 1851.0,860.5 1852.8,860.7 1854.6,860.7 1856.4,861.7 1858.2,861.4 1860.0,861.3 1861.8,860.7 1863.6,858.8 1865.4,857.7 1867.2,856.8 1869.0,855.9 1870.8,854.9 1872.6,855.1 1874.4,854.6 1876.2,854.4 1878.0,854.8 1879.8,854.6 1881.6,855.7 1883.4,855.1 1885.2,854.9 1887.0,855.6 1888.8,855.8 1890.6,854.7 1892.4,854.7 1894.2,854.0 1896.0,853.0 1897.8,852.7 1899.6,851.6 1901.4,850.8 1903.2,851.1 1905.0,850.1 1906.8,849.2 1908.6,846.7 1910.4,844.6 1912.2,842.7 1914.0,842.0 1915.8,840.4 1917.6,837.9 1919.4,836.0 1921.2,836.5 1923.0,835.8 1924.8,835.8 1926.6,834.1 1928.4,834.0 1930.2,832.2 1932.0,833.1 1933.8,832.8 1935.6,832.5 1937.4,830.9 1939.2,832.5 1941.0,830.2 1942.8,829.0 1944.6,830.3 1946.4,828.7 1948.2,827.8 1950.0,828.6 1951.8,829.2 1953.6,829.8 1955.4,828.6 1957.2,825.4 1959.0,825.5 1960.8,826.2 1962.6,822.0 1964.4,823.1 1966.2,821.0 1968.0,821.0 1969.8,819.7 1971.6,823.5 1973.4,823.8 1975.2,826.2 1977.0,823.6 1978.8,819.4 1980.6,817.0 1982.4,815.1 1984.2,818.9 1986.0,817.3 1987.8,816.9 1989.6,818.8 1991.4,818.8 1993.2,821.3 1995.0,822.5 1996.8,822.6 1998.6,819.7 2000.4,818.2 2002.2,819.1 2004.0,820.0 2005.8,818.7 2007.6,818.5 2009.4,819.8 2011.2,817.9 2013.0,818.7 2014.8,821.1 2016.6,823.1 2018.4,826.5 2020.2,826.9 2022.0,828.2 2023.8,826.7 2025.6,827.8 2027.4,828.2 2029.2,825.3 2031.0,823.1 2032.8,822.9 2034.6,823.1 2036.4,825.7 2038.2,823.1 2040.0,824.5 2041.8,826.6 2043.6,830.1 2045.4,828.1 2047.2,831.8 2049.0,832.0 2050.8,830.7 2052.6,831.8 2054.4,832.5 2056.2,830.7 2058.0,826.6 2059.8,829.3 2061.6,826.5 2063.4,826.1 2065.2,825.7 2067.0,822.5 2068.8,821.4 2070.6,819.9 2072.4,819.5 2074.2,820.8 2076.0,826.0 2077.8,827.4 2079.6,831.6 2081.4,830.1 2083.2,832.1 2085.0,828.9 2086.8,829.1 2088.6,826.0 2090.4,828.3 2092.2,828.8 2094.0,828.3 2095.8,831.2 2097.6,827.4 2099.4,822.8 2101.2,821.8 2103.0,817.9 2104.8,816.6 2106.6,818.0 2108.4,820.6 2110.2,821.4 2112.0,819.5 2113.8,819.7 2115.6,825.2 2117.4,825.5 2119.2,829.7 2121.0,830.0 2122.8,833.9 2124.6,832.8 2126.4,831.7 2128.2,830.4 2130.0,831.3 2131.8,833.6 2133.6,831.5 2135.4,829.5 2137.2,830.3 2139.0,833.2 2140.8,832.6 2142.6,834.5 2144.4,837.5 2146.2,836.4 2148.0,839.3 2149.8,838.5 2151.6,835.1 2153.4,832.7 2155.2,835.8 2157.0,833.7 2158.8,832.2 2160.6,833.4 2162.4,831.3 2164.2,829.5 2166.0,828.1 2167.8,830.3 2169.6,828.8 2171.4,829.6 2173.2,831.5 2175.0,831.7 2176.8,829.5 2178.6,829.3 2180.4,832.0 2182.2,833.3 2184.0,830.7 2185.8,834.7 2187.6,831.8 2189.4,831.1 2191.2,830.7 2193.0,832.6 2194.8,834.4 2196.6,836.5 2198.4,834.0 2200.2,838.1 2202.0,838.0 2203.8,841.7 2205.6,840.7 2207.4,841.0 2209.2,839.6 2211.0,842.7 2212.8,840.8 2214.6,843.5 2216.4,842.4 2218.2,843.4 2220.0,844.1 2221.8,843.6 2223.6,845.6 2225.4,846.6 2227.2,843.8 2229.0,843.1 2230.8,845.8 2232.6,843.0 2234.4,843.6 2236.2,843.9 2238.0,847.5 2239.8,845.3 2241.6,847.4 2243.4,849.0 2245.2,850.3 2247.0,850.3 2248.8,852.5 2250.6,853.0 2252.4,854.1 2254.2,854.2 2256.0,854.0 2257.8,854.6 2259.6,854.7 2261.4,854.3 2263.2,854.8 2265.0,854.8 2266.8,855.2 2268.6,855.3 2270.4,855.7 2272.2,855.0 2274.0,855.5 2275.8,855.3 2277.6,856.6 2279.4,857.3 2281.2,857.9 2283.0,857.2 2284.8,858.0 2286.6,858.4 2288.4,858.3 2290.2,858.6 2292.0,860.1 2293.8,860.8 2295.6,860.3 2297.4,861.3 2299.2,861.6 2301.0,861.6 2302.8,862.3 2304.6,862.0 2306.4,861.7 2308.2,861.2 2310.0,861.9 2311.8,861.9 2313.6,862.1 2315.4,861.7 2317.2,861.4 2319.0,861.0 2320.8,861.4 2322.6,860.9 2324.4,861.0 2326.2,861.2 2328.0,860.7 2329.8,861.0 2331.6,860.3 2333.4,860.5 2335.2,861.5 2337.0,861.0 2338.8,860.8 2340.6,860.8 2342.4,862.0 2344.2,861.6 2346.0,862.0 2347.8,862.3 2349.6,863.1 2351.4,862.9 2353.2,863.1 2355.0,862.5 2356.8,863.6 2358.6,864.0 2360.4,864.1 2362.2,864.6 2364.0,864.5 2365.8,865.1 2367.6,865.9 2369.4,866.2 2371.2,865.8 2373.0,867.3 2374.8,868.3 2376.6,867.9 2378.4,867.9 2380.2,868.7 2382.0,869.0 2383.8,869.8 2385.6,870.1 2387.4,870.7 2389.2,870.9 2391.0,871.6 2392.8,871.8 2394.6,872.6 2396.4,872.5 2398.2,872.3 2400.0,873.5 2401.8,873.9 2403.6,873.9 2405.4,873.3 2407.2,873.5 2409.0,873.7 2410.8,873.9 2412.6,873.5 2414.4,874.1 2416.2,874.9 2418.0,875.2 2419.8,875.7 2421.6,875.7 2423.4,875.9 2425.2,876.3 2427.0,876.6 2428.8,876.6 2430.6,876.2 2432.4,876.5 2434.2,876.8 2436.0,877.1 2437.8,876.9 2439.6,876.4 2441.4,875.7 2443.2,875.7 2445.0,875.5 2446.8,876.0 2448.6,876.3 2450.4,875.4 2452.2,875.6 2454.0,876.1 2455.8,875.5 2457.6,874.8 2459.4,875.3 2461.2,875.0 2463.0,874.6 2464.8,874.6 2466.6,874.1 2468.4,874.1 2470.2,874.4 2472.0,874.0 2473.8,873.7 2475.6,874.6 2477.4,875.7 2479.2,876.0 2481.0,875.4 2482.8,876.3 2484.6,875.4 2486.4,875.3 2488.2,875.2 2490.0,875.3 2491.8,876.3 2493.6,877.0 2495.4,877.0 2497.2,877.6 2499.0,877.3 2500.8,878.1 2502.6,877.7 2504.4,877.1 2506.2,876.0 2508.0,875.7 2509.8,875.3 2511.6,875.5 2513.4,874.4 2515.2,873.8 2517.0,874.5 2518.8,873.9 2520.6,874.5 2522.4,874.4 2524.2,875.2 2526.0,875.6 2527.8,875.1 2529.6,876.1 2531.4,876.1 2533.2,876.1 2535.0,876.6 2536.8,876.4 2538.6,875.4 2540.4,875.3 2542.2,874.3 2544.0,874.2 2545.8,873.3 2547.6,873.6 2549.4,874.5 2551.2,874.5 2553.0,873.7 2554.8,874.3 2556.6,874.6 2558.4,874.8 2560.2,874.5 2562.0,874.8 2563.8,875.2 2565.6,875.0 2567.4,875.9 2569.2,875.7 2571.0,875.9" fill="none" stroke="#00A2DD" stroke-width="2.6" stroke-linejoin="round"/></svg>
<span class="t" style="left:78.21px;top:200px;font-size:24.97px;color:#4055A3;transform:scaleX(1.1008);font-family:'DejaVu Sans','Liberation Sans',sans-serif;">38</span>
<span class="t" style="left:94.48px;top:295px;font-size:24.97px;color:#4055A3;transform:scaleX(1.1818);font-family:'DejaVu Sans','Liberation Sans',sans-serif;">0</span>
<span class="t" style="left:1.98px;top:343px;font-size:24.97px;color:#068C45;transform:scaleX(1.1068);font-family:'DejaVu Sans','Liberation Sans',sans-serif;">TR...ION</span>
<span class="t" style="left:-0.26px;top:370px;font-size:24.97px;color:#068C45;transform:scaleX(1.0821);font-family:'DejaVu Sans','Liberation Sans',sans-serif;">STAGE 2</span>
<span class="t" style="left:-0.19px;top:395px;font-size:24.97px;color:#068C45;transform:scaleX(1.0415);font-family:'DejaVu Sans','Liberation Sans',sans-serif;">STAGE 1</span>
<span class="t" style="left:61.4px;top:422px;font-size:24.97px;color:#068C45;transform:scaleX(1.0760);font-family:'DejaVu Sans','Liberation Sans',sans-serif;">OFF</span>
<span class="t" style="left:95.44px;top:503px;font-size:24.97px;color:#9D248F;transform:scaleX(1.1530);font-family:'DejaVu Sans','Liberation Sans',sans-serif;">7</span>
<span class="t" style="left:94.48px;top:598px;font-size:24.97px;color:#9D248F;transform:scaleX(1.1818);font-family:'DejaVu Sans','Liberation Sans',sans-serif;">0</span>
<span class="t" style="left:78.19px;top:653px;font-size:24.97px;color:#CE561B;transform:scaleX(0.9609);font-family:'DejaVu Sans','Liberation Sans',sans-serif;">81</span>
<span class="t" style="left:77.77px;top:748px;font-size:24.97px;color:#CE561B;transform:scaleX(1.1136);font-family:'DejaVu Sans','Liberation Sans',sans-serif;">20</span>
<span class="t" style="left:78.06px;top:805px;font-size:24.97px;color:#00A2DD;transform:scaleX(1.0940);font-family:'DejaVu Sans','Liberation Sans',sans-serif;">74</span>
<span class="t" style="left:78.42px;top:900px;font-size:24.97px;color:#00A2DD;transform:scaleX(1.0921);font-family:'DejaVu Sans','Liberation Sans',sans-serif;">60</span>
<span class="t" style="left:2368.73px;top:159px;font-size:29.08px;color:#E1498E;transform:scaleX(1.0069);font-family:'DejaVu Sans','Liberation Sans',sans-serif;text-shadow:1.6px 1.6px 0 rgba(150,165,200,.38);">High Power</span>
<span class="t" style="left:2130.6px;top:207px;font-size:29.08px;color:#4055A3;transform:scaleX(0.9991);font-family:'DejaVu Sans','Liberation Sans',sans-serif;text-shadow:1.6px 1.6px 0 rgba(150,165,200,.38);">Area A » Compressor Power</span>
<span class="t" style="left:2140.1px;top:357px;font-size:29.08px;color:#068C45;transform:scaleX(0.9926);font-family:'DejaVu Sans','Liberation Sans',sans-serif;text-shadow:1.6px 1.6px 0 rgba(150,165,200,.38);">Area A » Compressor Stage</span>
<span class="t" style="left:2260.6px;top:509px;font-size:29.08px;color:#9D248F;transform:scaleX(1.0003);font-family:'DejaVu Sans','Liberation Sans',sans-serif;text-shadow:1.6px 1.6px 0 rgba(150,165,200,.38);">Area A » Optimizer</span>
<span class="t" style="left:2149.8px;top:660px;font-size:29.08px;color:#CE561B;transform:scaleX(0.9891);font-family:'DejaVu Sans','Liberation Sans',sans-serif;text-shadow:1.6px 1.6px 0 rgba(150,165,200,.38);">Area A » Relative Humidity</span>
<span class="t" style="left:2278.4px;top:811px;font-size:29.08px;color:#00A2DD;transform:scaleX(0.9805);font-family:'DejaVu Sans','Liberation Sans',sans-serif;text-shadow:1.6px 1.6px 0 rgba(150,165,200,.38);">Area A » Wet Bulb</span>
<div style="left:819.1px;top:150px;width:32.8px;height:49.8px;background:#e5e3e1;"></div>
<span class="t" style="left:827.08px;top:162px;font-size:27.43px;color:#fff;transform:scaleX(1.0605);font-family:'DejaVu Sans','Liberation Sans',sans-serif;">2</span>
<div style="left:1600.2px;top:150px;width:32.8px;height:49.8px;background:#e5e3e1;"></div>
<span class="t" style="left:1608.94px;top:162px;font-size:27.43px;color:#fff;transform:scaleX(0.9217);font-family:'DejaVu Sans','Liberation Sans',sans-serif;">1</span>
<div style="left:830px;top:270.2px;width:167.4px;height:47.2px;background:#4055A3;border-radius:4.5px;"></div><span class="t" style="left:834.6px;top:281px;font-size:30.18px;color:#fff;transform:scaleX(0.9694);font-family:'DejaVu Sans','Liberation Sans',sans-serif;">0.0029 kW</span>
<div style="left:830px;top:572.8px;width:29.7px;height:47.2px;background:#9D248F;border-radius:4.5px;"></div><span class="t" style="left:834.31px;top:583px;font-size:30.18px;color:#fff;transform:scaleX(1.1155);font-family:'DejaVu Sans','Liberation Sans',sans-serif;">0</span>
<div style="left:830px;top:665px;width:107px;height:47.2px;background:#CE561B;border-radius:4.5px;"></div><span class="t" style="left:834.34px;top:675px;font-size:30.18px;color:#fff;transform:scaleX(0.9292);font-family:'DejaVu Sans','Liberation Sans',sans-serif;">58.8 %</span>
<div style="left:830px;top:845.2px;width:147px;height:47.2px;background:#00A2DD;border-radius:4.5px;"></div><span class="t" style="left:834.56px;top:856px;font-size:30.18px;color:#fff;transform:scaleX(0.9337);font-family:'DejaVu Sans','Liberation Sans',sans-serif;">64.284 °F</span>
<div style="left:1610px;top:270.2px;width:167.4px;height:47.2px;background:#4055A3;border-radius:4.5px;"></div><span class="t" style="left:1614.6px;top:281px;font-size:30.18px;color:#fff;transform:scaleX(0.9694);font-family:'DejaVu Sans','Liberation Sans',sans-serif;">0.0029 kW</span>
<div style="left:1610px;top:572.8px;width:30px;height:47.2px;background:#9D248F;border-radius:4.5px;"></div><span class="t" style="left:1614.27px;top:583px;font-size:30.18px;color:#fff;transform:scaleX(1.1352);font-family:'DejaVu Sans','Liberation Sans',sans-serif;">0</span>
<div style="left:1610px;top:657.3px;width:145px;height:47.2px;background:#CE561B;border-radius:4.5px;"></div><span class="t" style="left:1614.53px;top:668px;font-size:30.18px;color:#fff;transform:scaleX(0.9440);font-family:'DejaVu Sans','Liberation Sans',sans-serif;">63.461 %</span>
<div style="left:1610px;top:820px;width:129.8px;height:47.2px;background:#00A2DD;border-radius:4.5px;"></div><span class="t" style="left:1614.54px;top:830px;font-size:30.18px;color:#fff;transform:scaleX(0.9395);font-family:'DejaVu Sans','Liberation Sans',sans-serif;">68.43 °F</span>
<div style="left:654.4px;top:902.1px;width:330.9px;height:43.6px;background:#e8f2f5;border:1.6px solid #a3a3a3;border-radius:5px;box-sizing:border-box;"></div>
<span class="t" style="left:657.97px;top:912px;font-size:27.98px;color:#999;transform:scaleX(1.0000);font-family:'DejaVu Sans','Liberation Sans',sans-serif;letter-spacing:1.69px;">9/1/2020 6:45:23 AM</span>
<div style="left:1435.3px;top:902.1px;width:330.2px;height:43.6px;background:#e8f2f5;border:1.6px solid #a3a3a3;border-radius:5px;box-sizing:border-box;"></div>
<span class="t" style="left:1438.87px;top:912px;font-size:27.98px;color:#999;transform:scaleX(1.0000);font-family:'DejaVu Sans','Liberation Sans',sans-serif;letter-spacing:1.65px;">9/2/2020 5:44:02 AM</span>
<span class="t" style="left:263.23px;top:950px;font-size:28.92px;color:#8c959d;transform:scaleX(1.0491);">4:00 pm</span>
<span class="t" style="left:551.08px;top:950px;font-size:28.92px;color:#8c959d;transform:scaleX(1.0152);">Sep 1</span>
<span class="t" style="left:807px;top:950px;font-size:28.92px;color:#8c959d;transform:scaleX(1.0475);">8:00 am</span>
<span class="t" style="left:1079.23px;top:950px;font-size:28.92px;color:#8c959d;transform:scaleX(1.0491);">4:00 pm</span>
<span class="t" style="left:1366.04px;top:950px;font-size:28.92px;color:#8c959d;transform:scaleX(1.0435);">Sep 2</span>
<span class="t" style="left:1622.9px;top:950px;font-size:28.92px;color:#8c959d;transform:scaleX(1.0475);">8:00 am</span>
<span class="t" style="left:1895.13px;top:950px;font-size:28.92px;color:#8c959d;transform:scaleX(1.0491);">4:00 pm</span>
<span class="t" style="left:2181.95px;top:950px;font-size:28.92px;color:#8c959d;transform:scaleX(1.0406);">Sep 3</span>
<span class="t" style="left:2438.8px;top:950px;font-size:28.92px;color:#8c959d;transform:scaleX(1.0475);">8:00 am</span>
<svg class="i" style="left:19.9px;top:994.1px;width:25.1px;height:33.9px;" viewBox="0 0 25.1 33.9" preserveAspectRatio="none"><path d="M10.05 0h5a1.2 1.2 0 0 1 1.2 1.2V18.64H25.1L12.55 33.9L0 18.64H8.85V1.2A1.2 1.2 0 0 1 10.05 0z" fill="#007960"/></svg>
<span class="t" style="left:64.66px;top:998px;font-size:26.16px;color:#007960;transform:scaleX(1.0112);">8/31/2020 10:20 AM <span class="u">CDT</span></span>
<svg class="i" style="left:1010.8px;top:994.6px;width:35.6px;height:33.6px;" viewBox="122.25 -1409.21 1541.75 1538.43" preserveAspectRatio="none"><path fill="#007960" d="M1619 -1395 909 -685C903 -679 899 -673 896 -666V-1376C896 -1411 876 -1420 851 -1395L141 -685C116 -660 116 -620 141 -595L851 115C876 140 896 131 896 96V-614C899 -607 903 -601 909 -595L1619 115C1644 140 1664 131 1664 96V-1376C1664 -1411 1644 -1420 1619 -1395Z"/></svg>
<svg class="i" style="left:1084.3px;top:994.6px;width:18.6px;height:33.6px;" viewBox="0 0 18.6 33.6" preserveAspectRatio="none"><polygon points="17.1,1.5 17.1,32.1 1.6,16.8" fill="#007960" stroke="#007960" stroke-width="3" stroke-linejoin="round"/></svg>
<span class="t" style="left:1138.38px;top:998px;font-size:26.16px;color:#007960;transform:scaleX(1.0288);">3 days</span>
<svg class="i" style="left:1253.6px;top:994.6px;width:18.6px;height:33.6px;" viewBox="0 0 18.6 33.6" preserveAspectRatio="none"><polygon points="1.5,1.5 1.5,32.1 17,16.8" fill="#007960" stroke="#007960" stroke-width="3" stroke-linejoin="round"/></svg>
<svg class="i" style="left:1309.7px;top:994.6px;width:35.6px;height:33.6px;" viewBox="0 -1409.21 1541.75 1538.43" preserveAspectRatio="none"><path fill="#007960" d="M45 115 755 -595C761 -601 765 -607 768 -614V96C768 131 788 140 813 115L1523 -595C1548 -620 1548 -660 1523 -685L813 -1395C788 -1420 768 -1411 768 -1376V-666C765 -673 761 -679 755 -685L45 -1395C20 -1420 0 -1411 0 -1376V96C0 131 20 140 45 115Z"/></svg>
<svg class="i" style="left:1381.7px;top:994px;width:22.3px;height:34.8px;" viewBox="0 -1409.21 1024 1538.43" preserveAspectRatio="none"><path fill="#007960" d="M45 115 755 -595C761 -601 765 -607 768 -614V64C768 99 797 128 832 128H960C995 128 1024 99 1024 64V-1344C1024 -1379 995 -1408 960 -1408H832C797 -1408 768 -1379 768 -1344V-666C765 -673 761 -679 755 -685L45 -1395C20 -1420 0 -1411 0 -1376V96C0 131 20 140 45 115Z"/></svg>
<svg class="i" style="left:1445.8px;top:1000.8px;width:23.6px;height:21.4px;" viewBox="0 -1408 1536 1536" preserveAspectRatio="none"><path fill="#007960" d="M1511 -480C1511 -497 1497 -512 1479 -512H1287C1272 -512 1262 -503 1257 -489C1240 -449 1228 -411 1204 -372C1111 -220 946 -128 768 -128C639 -128 514 -178 420 -266L557 -403C569 -415 576 -431 576 -448C576 -483 547 -512 512 -512H64C29 -512 0 -483 0 -448V0C0 35 29 64 64 64C81 64 97 57 109 45L238 -84C380 51 569 128 764 128C1133 128 1425 -119 1510 -473C1511 -475 1511 -478 1511 -480ZM1536 -1280C1536 -1315 1507 -1344 1472 -1344C1455 -1344 1439 -1337 1427 -1325L1297 -1196C1155 -1330 964 -1408 768 -1408C399 -1408 104 -1162 18 -807C18 -805 18 -802 18 -800C18 -783 32 -768 50 -768H249C264 -768 274 -777 279 -791C296 -831 308 -869 332 -908C425 -1060 590 -1152 768 -1152C897 -1152 1022 -1103 1117 -1015L979 -877C967 -865 960 -849 960 -832C960 -797 989 -768 1024 -768H1472C1507 -768 1536 -797 1536 -832Z"/></svg>
<span class="t" style="left:2288.48px;top:998px;font-size:26.16px;color:#007960;transform:scaleX(1.0136);">9/3/2020 10:20 AM <span class="u">CDT</span></span>
<div style="left:0px;top:1044px;width:2605px;height:163.2px;background:#f6f6f6;border-top:2px solid #e3e3e3;box-sizing:border-box;"></div>
<div style="left:63px;top:1064.6px;width:2449px;height:35px;border:4.9px solid #c9c9c9;border-radius:6px;box-sizing:border-box;"></div>
<div style="left:1456px;top:1064.4px;width:1055px;height:35.2px;background:#fff;border-top:5.4px solid #007960;border-bottom:5.3px solid #007960;box-sizing:border-box;"></div>
<div style="left:1450px;top:1057.2px;width:12.6px;height:49.6px;background:#007960;"></div>
<div style="left:1454.7px;top:1062.4px;width:3.5px;height:39.4px;background:#f3f3f3;"></div>
<div style="left:2504.8px;top:1057.2px;width:12.6px;height:49.6px;background:#007960;"></div>
<div style="left:2509.5px;top:1062.4px;width:3.5px;height:39.4px;background:#f3f3f3;"></div>
<div style="left:260.3px;top:1099.6px;width:3px;height:7.4px;background:#ccc;"></div>
<span class="t" style="left:225.35px;top:1111px;font-size:24.56px;color:#a09ea3;transform:scaleX(0.9539);">Aug 28</span>
<div style="left:609.3px;top:1099.6px;width:3px;height:7.4px;background:#ccc;"></div>
<span class="t" style="left:574.35px;top:1111px;font-size:24.56px;color:#a09ea3;transform:scaleX(0.9551);">Aug 29</span>
<div style="left:958.4px;top:1099.6px;width:3px;height:7.4px;background:#ccc;"></div>
<span class="t" style="left:923.45px;top:1111px;font-size:24.56px;color:#a09ea3;transform:scaleX(0.9524);">Aug 30</span>
<div style="left:1307.7px;top:1099.6px;width:3px;height:7.4px;background:#ccc;"></div>
<span class="t" style="left:1273.3px;top:1111px;font-size:24.56px;color:#a09ea3;transform:scaleX(0.9411);">Aug 31</span>
<div style="left:1656.9px;top:1099.6px;width:3px;height:7.4px;background:#ccc;"></div>
<span class="t" style="left:1617.76px;top:1111px;font-size:24.56px;color:#a09ea3;transform:scaleX(0.9876);">Sep '20</span>
<div style="left:2006px;top:1099.6px;width:3px;height:7.4px;background:#ccc;"></div>
<span class="t" style="left:1977.15px;top:1111px;font-size:24.56px;color:#a09ea3;transform:scaleX(0.9539);">Sep 2</span>
<div style="left:2355.4px;top:1099.6px;width:3px;height:7.4px;background:#ccc;"></div>
<span class="t" style="left:2326.6px;top:1111px;font-size:24.56px;color:#a09ea3;transform:scaleX(0.9496);">Sep 3</span>
<svg class="i" style="left:2537.8px;top:1066.8px;width:29.1px;height:34.9px;" viewBox="0 0 29.1 34.9" preserveAspectRatio="none"><rect x="0" y="0" width="13.3" height="34.9" rx="2.4" fill="#007960"/><rect x="15.7" y="0" width="13.4" height="34.9" rx="2.4" fill="#007960"/><polyline points="0,19 2.6,12 4.6,9 8.6,29 11.2,6 14.6,20 17,9 19.2,6 22.6,29 25.8,7 27.6,16 29.1,22" fill="none" stroke="#f6f6f6" stroke-width="1.7" stroke-linejoin="round"/></svg>
<svg class="i" style="left:19.9px;top:1157.2px;width:25.1px;height:34.2px;" viewBox="0 0 25.1 34.2" preserveAspectRatio="none"><path d="M10.05 0h5a1.2 1.2 0 0 1 1.2 1.2V18.81H25.1L12.55 34.2L0 18.81H8.85V1.2A1.2 1.2 0 0 1 10.05 0z" fill="#007960" transform="translate(0 34.2) scale(1 -1)"/></svg>
<span class="t" style="left:64.59px;top:1167px;font-size:26.16px;color:#007960;transform:scaleX(1.0763);">8/27/2020</span>
<span class="t" style="left:1275.74px;top:1166px;font-size:26.16px;color:#007960;transform:scaleX(1.0227);">7 days</span>
<span class="t" style="left:2454.6px;top:1167px;font-size:26.16px;color:#007960;transform:scaleX(1.0800);">9/3/2020</span>
<div style="left:0px;top:1207.1px;width:1444.9px;height:64.6px;background:#007960;"></div>
<svg class="i" style="left:24.7px;top:1223.8px;width:38.3px;height:28.8px;" viewBox="0 -1408 2048 1536" preserveAspectRatio="none"><path fill="#fff" d="M2048 0H128V-1408H0V128H2048ZM1664 -1024 1280 -704 704 -1280 256 -704V-128H1920Z"/></svg>
<span class="t" style="left:69.01px;top:1224px;font-size:31.54px;color:#fff;transform:scaleX(0.9612);">Details</span>
<div style="left:1244.1px;top:1212px;width:188.8px;height:55px;background:#fff;border:1.6px solid #c8c8c8;border-radius:7px;box-sizing:border-box;"></div>
<svg class="i" style="left:1259.1px;top:1225.2px;width:32.3px;height:28.3px;" viewBox="0 -1520 1920 1761" preserveAspectRatio="none"><path fill="#333" d="M896 -640C896 -499 781 -384 640 -384C499 -384 384 -499 384 -640C384 -781 499 -896 640 -896C781 -896 896 -781 896 -640ZM1664 -128C1664 -58 1607 0 1536 0C1466 0 1408 -57 1408 -128C1408 -198 1466 -256 1536 -256C1606 -256 1664 -198 1664 -128ZM1664 -1152C1664 -1082 1607 -1024 1536 -1024C1466 -1024 1408 -1081 1408 -1152C1408 -1222 1466 -1280 1536 -1280C1606 -1280 1664 -1222 1664 -1152ZM1280 -731C1280 -745 1270 -758 1256 -761L1104 -784C1095 -812 1083 -839 1070 -866C1098 -905 1128 -941 1157 -980C1161 -986 1164 -992 1164 -999C1164 -1027 1046 -1135 1020 -1159C1014 -1164 1007 -1167 999 -1167C992 -1167 985 -1165 979 -1160L861 -1071C837 -1083 812 -1094 786 -1102L763 -1255C761 -1269 747 -1280 733 -1280H547C533 -1280 521 -1270 517 -1256C504 -1207 499 -1152 494 -1102C467 -1093 442 -1083 417 -1070L302 -1160C296 -1164 289 -1167 281 -1167C252 -1167 140 -1046 120 -1019C115 -1013 113 -1006 113 -999C113 -992 116 -985 120 -979C152 -941 182 -904 210 -864C197 -839 186 -814 178 -788L23 -764C10 -762 0 -747 0 -734V-549C0 -535 10 -522 24 -520L176 -496C185 -468 197 -441 211 -414C182 -375 152 -338 123 -300C119 -294 116 -288 116 -281C116 -252 234 -145 260 -121C266 -116 273 -113 281 -113C288 -113 296 -115 301 -120L419 -209C443 -197 468 -186 494 -178L517 -25C519 -11 533 0 547 0H733C747 0 759 -10 763 -24C776 -73 781 -128 786 -179C813 -187 838 -197 863 -210L978 -120C984 -116 991 -113 999 -113C1028 -113 1140 -235 1160 -262C1165 -267 1167 -274 1167 -281C1167 -289 1164 -295 1160 -301C1128 -339 1098 -376 1070 -416C1083 -441 1094 -466 1102 -492L1257 -516C1270 -518 1280 -533 1280 -546ZM1920 -198C1920 -213 1791 -227 1771 -229C1763 -247 1753 -265 1741 -281C1750 -301 1792 -401 1792 -419C1792 -421 1791 -424 1788 -426C1776 -433 1669 -496 1664 -496L1658 -494C1624 -460 1594 -421 1566 -382C1556 -383 1546 -384 1536 -384C1526 -384 1516 -383 1506 -382C1496 -397 1421 -496 1408 -496C1403 -496 1296 -432 1284 -426C1281 -424 1280 -421 1280 -419C1280 -402 1322 -301 1331 -281C1319 -265 1309 -247 1301 -229C1281 -227 1152 -213 1152 -198V-58C1152 -43 1281 -29 1301 -27C1309 -8 1319 9 1331 25C1322 45 1280 146 1280 163C1280 165 1281 168 1284 170C1296 177 1403 241 1408 241C1421 241 1496 141 1506 126C1516 127 1526 128 1536 128C1546 128 1556 127 1566 126C1576 141 1651 241 1664 241C1669 241 1776 177 1788 170C1791 168 1792 166 1792 163C1792 145 1750 45 1741 25C1753 9 1763 -8 1771 -27C1791 -29 1920 -43 1920 -58ZM1920 -1222C1920 -1237 1791 -1251 1771 -1253C1763 -1271 1753 -1289 1741 -1305C1750 -1325 1792 -1425 1792 -1443C1792 -1445 1791 -1448 1788 -1450C1776 -1457 1669 -1520 1664 -1520L1658 -1518C1624 -1484 1594 -1445 1566 -1406C1556 -1407 1546 -1408 1536 -1408C1526 -1408 1516 -1407 1506 -1406C1496 -1421 1421 -1520 1408 -1520C1403 -1520 1296 -1456 1284 -1450C1281 -1448 1280 -1445 1280 -1443C1280 -1426 1322 -1325 1331 -1305C1319 -1289 1309 -1271 1301 -1253C1281 -1251 1152 -1237 1152 -1222V-1082C1152 -1067 1281 -1053 1301 -1051C1309 -1032 1319 -1015 1331 -999C1322 -979 1280 -878 1280 -861C1280 -859 1281 -856 1284 -854C1296 -847 1403 -783 1408 -783C1421 -783 1496 -883 1506 -898C1516 -897 1526 -896 1536 -896C1546 -896 1556 -897 1566 -898C1576 -883 1651 -783 1664 -783C1669 -783 1776 -847 1788 -854C1791 -856 1792 -858 1792 -861C1792 -879 1750 -979 1741 -999C1753 -1015 1763 -1032 1771 -1051C1791 -1053 1920 -1067 1920 -1082Z"/></svg>
<span class="t" style="left:1297.52px;top:1229px;font-size:24.42px;color:#222;transform:scaleX(1.0455);">Customize</span>
<svg class="i" style="left:187.9px;top:1298.6px;width:22.6px;height:21.7px;" viewBox="110 -1170 1188 1188" preserveAspectRatio="none"><path fill="#007960" d="M1298 -214C1298 -239 1288 -264 1270 -282L976 -576L1270 -870C1288 -888 1298 -913 1298 -938C1298 -963 1288 -988 1270 -1006L1134 -1142C1116 -1160 1091 -1170 1066 -1170C1041 -1170 1016 -1160 998 -1142L704 -848L410 -1142C392 -1160 367 -1170 342 -1170C317 -1170 292 -1160 274 -1142L138 -1006C120 -988 110 -963 110 -938C110 -913 120 -888 138 -870L432 -576L138 -282C120 -264 110 -239 110 -214C110 -189 120 -164 138 -146L274 -10C292 8 317 18 342 18C367 18 392 8 410 -10L704 -304L998 -10C1016 8 1041 18 1066 18C1091 18 1116 8 1134 -10L1270 -146C1288 -164 1298 -189 1298 -214Z"/></svg>
<svg class="i" style="left:236.5px;top:1293.8px;width:28.6px;height:28.6px;" viewBox="0 0 28.6 28.6" preserveAspectRatio="none"><rect x="0" y="0" width="28.6" height="28.6" rx="4.6" fill="#212529"/><polyline points="6.3,14.6 11.9,20.2 22.4,8.9" fill="none" stroke="#fff" stroke-width="4.1" stroke-linejoin="miter"/></svg>
<svg class="i" style="left:358.6px;top:1294.7px;width:19.9px;height:26.8px;" viewBox="0 -1344 1024 1408" preserveAspectRatio="none"><path fill="#666" d="M1024 -448C1024 -483 995 -512 960 -512H64C29 -512 0 -483 0 -448C0 -431 7 -415 19 -403L467 45C479 57 495 64 512 64C529 64 545 57 557 45L1005 -403C1017 -415 1024 -431 1024 -448ZM1024 -832C1024 -849 1017 -865 1005 -877L557 -1325C545 -1337 529 -1344 512 -1344C495 -1344 479 -1337 467 -1325L19 -877C7 -865 0 -849 0 -832C0 -797 29 -768 64 -768H960C995 -768 1024 -797 1024 -832Z"/></svg>
<span class="t" style="left:402.22px;top:1295px;font-size:29.94px;color:#212529;transform:scaleX(1.0515);-webkit-text-stroke:0.95px;">Name</span>
<svg class="i" style="left:505px;top:1294.7px;width:19.6px;height:26.8px;" viewBox="0 -1344 1024 1408" preserveAspectRatio="none"><path fill="#666" d="M1024 -448C1024 -483 995 -512 960 -512H64C29 -512 0 -483 0 -448C0 -431 7 -415 19 -403L467 45C479 57 495 64 512 64C529 64 545 57 557 45L1005 -403C1017 -415 1024 -431 1024 -448ZM1024 -832C1024 -849 1017 -865 1005 -877L557 -1325C545 -1337 529 -1344 512 -1344C495 -1344 479 -1337 467 -1325L19 -877C7 -865 0 -849 0 -832C0 -797 29 -768 64 -768H960C995 -768 1024 -797 1024 -832Z"/></svg>
<span class="t" style="left:1013.54px;top:1295px;font-size:29.94px;color:#212529;transform:scaleX(0.9818);-webkit-text-stroke:0.95px;">Assets</span>
<span class="t" style="left:1115.21px;top:1295px;font-size:29.94px;color:#007960;transform:scaleX(1.0538);-webkit-text-stroke:0.95px;">Lane</span>
<svg class="i" style="left:1203.9px;top:1294.9px;width:19px;height:11.3px;" viewBox="0 -832 1024 576" preserveAspectRatio="none"><path fill="#007960" d="M1024 -320C1024 -337 1017 -353 1005 -365L557 -813C545 -825 529 -832 512 -832C495 -832 479 -825 467 -813L19 -365C7 -353 0 -337 0 -320C0 -285 29 -256 64 -256H960C995 -256 1024 -285 1024 -320Z"/></svg>
<svg class="i" style="left:1386.6px;top:1285.6px;width:36.2px;height:30.5px;" viewBox="0 0 36.2 30.5" preserveAspectRatio="none"><rect x="1" y="1" width="25.6" height="23.2" fill="none" stroke="#212529" stroke-width="2"/><path d="M9.5 1V24.2M18.1 1V24.2M1 8.7H26.6M1 16.4H26.6" stroke="#212529" stroke-width="1.9" fill="none"/><circle cx="24" cy="18.3" r="12.2" fill="#fff"/><circle cx="24" cy="18.3" r="10.7" fill="#212529"/><path d="M24 11.6V25M17.3 18.3H30.7" stroke="#fff" stroke-width="4" fill="none"/></svg>
<div style="left:0px;top:1337.2px;width:1444.9px;height:4.6px;background:#dee2e6;"></div>
<div style="left:0px;top:1341.8px;width:1444.9px;height:58.1px;background:#fdf7e4;border-bottom:2px solid #dee2e6;box-sizing:border-box;"></div>
<svg class="i" style="left:75.9px;top:1354.7px;width:30.9px;height:30.3px;" viewBox="31.86 -1408 1632.14 1632" preserveAspectRatio="none"><path fill="#007960" d="M1440 -1088C1440 -1035 1397 -992 1344 -992C1291 -992 1248 -1035 1248 -1088C1248 -1141 1291 -1184 1344 -1184C1397 -1184 1440 -1141 1440 -1088ZM1664 -1376C1664 -1394 1648 -1408 1630 -1408C1282 -1408 1091 -1328 841 -1079C784 -1021 725 -955 665 -884L286 -864C276 -863 266 -857 260 -848L36 -464C29 -452 31 -436 41 -425L105 -361C111 -355 120 -352 128 -352C131 -352 134 -352 137 -353L413 -438L694 -157L609 119C606 130 609 142 617 151L681 215C688 221 696 224 704 224C710 224 715 223 720 220L1104 -4C1113 -10 1119 -20 1120 -30L1140 -409C1211 -469 1277 -528 1335 -585C1572 -823 1664 -1044 1664 -1376Z"/></svg>
<svg class="i" style="left:138.2px;top:1352.9px;width:28px;height:27.5px;" viewBox="0 -1408 1536 1536" preserveAspectRatio="none"><path fill="#007960" d="M1024 -160C1024 -142 1010 -128 992 -128H544C526 -128 512 -142 512 -160V-320C512 -338 526 -352 544 -352H640V-672H544C526 -672 512 -686 512 -704V-864C512 -882 526 -896 544 -896H864C882 -896 896 -882 896 -864V-352H992C1010 -352 1024 -338 1024 -320V-160ZM896 -1056C896 -1038 882 -1024 864 -1024H672C654 -1024 640 -1038 640 -1056V-1216C640 -1234 654 -1248 672 -1248H864C882 -1248 896 -1234 896 -1216V-1056ZM1536 -640C1536 -1064 1192 -1408 768 -1408C344 -1408 0 -1064 0 -640C0 -216 344 128 768 128C1192 128 1536 -216 1536 -640Z"/></svg>
<svg class="i" style="left:187.9px;top:1358.2px;width:22.6px;height:21.6px;" viewBox="110 -1170 1188 1188" preserveAspectRatio="none"><path fill="#007960" d="M1298 -214C1298 -239 1288 -264 1270 -282L976 -576L1270 -870C1288 -888 1298 -913 1298 -938C1298 -963 1288 -988 1270 -1006L1134 -1142C1116 -1160 1091 -1170 1066 -1170C1041 -1170 1016 -1160 998 -1142L704 -848L410 -1142C392 -1160 367 -1170 342 -1170C317 -1170 292 -1160 274 -1142L138 -1006C120 -988 110 -963 110 -938C110 -913 120 -888 138 -870L432 -576L138 -282C120 -264 110 -239 110 -214C110 -189 120 -164 138 -146L274 -10C292 8 317 18 342 18C367 18 392 8 410 -10L704 -304L998 -10C1016 8 1041 18 1066 18C1091 18 1116 8 1134 -10L1270 -146C1288 -164 1298 -189 1298 -214Z"/></svg>
<svg class="i" style="left:236.5px;top:1354.7px;width:28.6px;height:28.6px;" viewBox="0 0 28.6 28.6" preserveAspectRatio="none"><rect x="0" y="0" width="28.6" height="28.6" rx="4.6" fill="#212529"/><polyline points="6.3,14.6 11.9,20.2 22.4,8.9" fill="none" stroke="#fff" stroke-width="4.1" stroke-linejoin="miter"/></svg>
<svg class="i" style="left:292.9px;top:1348.3px;width:36.2px;height:33.5px;" viewBox="0 0 36.2 33.5" preserveAspectRatio="none"><polyline points="0.9,22.4 7.4,1.6 16.2,25.9 21.2,8.2 26.8,32.2 33.2,18.2 34.9,26.5" fill="none" stroke="#4055A3" stroke-width="3.6" stroke-linejoin="round" stroke-linecap="round"/></svg>
<span class="t" style="left:346.39px;top:1356px;font-size:29.07px;color:#212529;transform:scaleX(0.9789);">kW</span>
<span class="t" style="left:403.26px;top:1356px;font-size:29.94px;color:#212529;transform:scaleX(1.0320);-webkit-text-stroke:0.95px;">Compressor Power</span>
<svg class="i" style="left:687.5px;top:1352px;width:34.2px;height:27.2px;" viewBox="0 -1280 1792 1536" preserveAspectRatio="none"><path fill="#007960" d="M640 -640C640 -711 583 -768 512 -768C441 -768 384 -711 384 -640C384 -569 441 -512 512 -512C583 -512 640 -569 640 -640ZM1024 -640C1024 -711 967 -768 896 -768C825 -768 768 -711 768 -640C768 -569 825 -512 896 -512C967 -512 1024 -569 1024 -640ZM1408 -640C1408 -711 1351 -768 1280 -768C1209 -768 1152 -711 1152 -640C1152 -569 1209 -512 1280 -512C1351 -512 1408 -569 1408 -640ZM896 -1152C1312 -1152 1664 -918 1664 -640C1664 -362 1312 -128 896 -128C853 -128 809 -131 766 -136L709 -142L666 -104C584 -32 492 25 391 67C417 21 442 -34 461 -105L488 -201L401 -251C228 -349 128 -491 128 -640C128 -918 480 -1152 896 -1152ZM1792 -640C1792 -993 1391 -1280 896 -1280C401 -1280 0 -993 0 -640C0 -437 132 -256 338 -139C291 28 219 88 156 159C141 177 124 192 129 217C129 217 129 217 129 218C134 240 152 256 172 256C173 256 175 256 177 256C216 251 255 244 291 234C464 190 620 108 751 -8C798 -3 847 0 896 0C1391 0 1792 -286 1792 -640Z"/></svg>
<span class="t u" style="left:1013.54px;top:1356px;font-size:29.94px;color:#007960;transform:scaleX(0.9480);text-decoration-thickness:2.2px;text-underline-offset:3.5px;">Area A</span>
<span class="t" style="left:1205.95px;top:1356px;font-size:29.36px;color:#212529;transform:scaleX(1.0092);">1</span>
<div style="left:0px;top:1399.9px;width:1444.9px;height:58.1px;background:#fff;border-bottom:2px solid #dee2e6;box-sizing:border-box;"></div>
<svg class="i" style="left:75.9px;top:1412.8px;width:30.9px;height:30.3px;" viewBox="31.86 -1408 1632.14 1632" preserveAspectRatio="none"><path fill="#007960" d="M1440 -1088C1440 -1035 1397 -992 1344 -992C1291 -992 1248 -1035 1248 -1088C1248 -1141 1291 -1184 1344 -1184C1397 -1184 1440 -1141 1440 -1088ZM1664 -1376C1664 -1394 1648 -1408 1630 -1408C1282 -1408 1091 -1328 841 -1079C784 -1021 725 -955 665 -884L286 -864C276 -863 266 -857 260 -848L36 -464C29 -452 31 -436 41 -425L105 -361C111 -355 120 -352 128 -352C131 -352 134 -352 137 -353L413 -438L694 -157L609 119C606 130 609 142 617 151L681 215C688 221 696 224 704 224C710 224 715 223 720 220L1104 -4C1113 -10 1119 -20 1120 -30L1140 -409C1211 -469 1277 -528 1335 -585C1572 -823 1664 -1044 1664 -1376Z"/></svg>
<svg class="i" style="left:138.2px;top:1411px;width:28px;height:27.5px;" viewBox="0 -1408 1536 1536" preserveAspectRatio="none"><path fill="#007960" d="M1024 -160C1024 -142 1010 -128 992 -128H544C526 -128 512 -142 512 -160V-320C512 -338 526 -352 544 -352H640V-672H544C526 -672 512 -686 512 -704V-864C512 -882 526 -896 544 -896H864C882 -896 896 -882 896 -864V-352H992C1010 -352 1024 -338 1024 -320V-160ZM896 -1056C896 -1038 882 -1024 864 -1024H672C654 -1024 640 -1038 640 -1056V-1216C640 -1234 654 -1248 672 -1248H864C882 -1248 896 -1234 896 -1216V-1056ZM1536 -640C1536 -1064 1192 -1408 768 -1408C344 -1408 0 -1064 0 -640C0 -216 344 128 768 128C1192 128 1536 -216 1536 -640Z"/></svg>
<svg class="i" style="left:187.9px;top:1416.3px;width:22.6px;height:21.6px;" viewBox="110 -1170 1188 1188" preserveAspectRatio="none"><path fill="#007960" d="M1298 -214C1298 -239 1288 -264 1270 -282L976 -576L1270 -870C1288 -888 1298 -913 1298 -938C1298 -963 1288 -988 1270 -1006L1134 -1142C1116 -1160 1091 -1170 1066 -1170C1041 -1170 1016 -1160 998 -1142L704 -848L410 -1142C392 -1160 367 -1170 342 -1170C317 -1170 292 -1160 274 -1142L138 -1006C120 -988 110 -963 110 -938C110 -913 120 -888 138 -870L432 -576L138 -282C120 -264 110 -239 110 -214C110 -189 120 -164 138 -146L274 -10C292 8 317 18 342 18C367 18 392 8 410 -10L704 -304L998 -10C1016 8 1041 18 1066 18C1091 18 1116 8 1134 -10L1270 -146C1288 -164 1298 -189 1298 -214Z"/></svg>
<div style="left:237.7px;top:1414.3px;width:25.6px;height:25.6px;border:2.1px solid #212529;border-radius:6px;background:#fff;box-sizing:border-box;"></div>
<svg class="i" style="left:293.8px;top:1414px;width:30.9px;height:27.5px;" viewBox="0 -1408 1664 1536" preserveAspectRatio="none"><path fill="#068C45" d="M725 -977C796 -832 857 -677 909 -525C890 -524 871 -523 852 -523C753 -523 654 -526 555 -527ZM0 128C63 128 125 125 188 114C202 112 222 106 236 106C352 106 469 126 585 126C586 117 587 108 587 99C587 79 587 60 586 41C529 33 382 30 382 -47C382 -85 483 -347 509 -405L959 -403C975 -362 1104 -65 1104 -29C1104 8 1051 15 1024 21L893 49C890 75 889 101 889 127C1020 123 1151 112 1282 112C1409 112 1536 128 1663 128C1663 119 1664 111 1664 102C1664 83 1661 64 1658 45C1611 27 1519 21 1486 -5C1472 -16 1458 -46 1451 -62C1401 -164 1366 -271 1321 -375C1245 -551 1176 -730 1101 -907L896 -1387C893 -1394 889 -1401 885 -1408H832H757L477 -684L240 -68C198 40 96 20 2 49L0 128Z"/></svg>
<span class="t" style="left:403.27px;top:1414px;font-size:29.94px;color:#212529;transform:scaleX(1.0202);-webkit-text-stroke:0.95px;">Compressor Stage</span>
<svg class="i" style="left:676.9px;top:1410.1px;width:34.2px;height:27.2px;" viewBox="0 -1280 1792 1536" preserveAspectRatio="none"><path fill="#007960" d="M640 -640C640 -711 583 -768 512 -768C441 -768 384 -711 384 -640C384 -569 441 -512 512 -512C583 -512 640 -569 640 -640ZM1024 -640C1024 -711 967 -768 896 -768C825 -768 768 -711 768 -640C768 -569 825 -512 896 -512C967 -512 1024 -569 1024 -640ZM1408 -640C1408 -711 1351 -768 1280 -768C1209 -768 1152 -711 1152 -640C1152 -569 1209 -512 1280 -512C1351 -512 1408 -569 1408 -640ZM896 -1152C1312 -1152 1664 -918 1664 -640C1664 -362 1312 -128 896 -128C853 -128 809 -131 766 -136L709 -142L666 -104C584 -32 492 25 391 67C417 21 442 -34 461 -105L488 -201L401 -251C228 -349 128 -491 128 -640C128 -918 480 -1152 896 -1152ZM1792 -640C1792 -993 1391 -1280 896 -1280C401 -1280 0 -993 0 -640C0 -437 132 -256 338 -139C291 28 219 88 156 159C141 177 124 192 129 217C129 217 129 217 129 218C134 240 152 256 172 256C173 256 175 256 177 256C216 251 255 244 291 234C464 190 620 108 751 -8C798 -3 847 0 896 0C1391 0 1792 -286 1792 -640Z"/></svg>
<span class="t u" style="left:1013.54px;top:1414px;font-size:29.94px;color:#007960;transform:scaleX(0.9480);text-decoration-thickness:2.2px;text-underline-offset:3.5px;">Area A</span>
<span class="t" style="left:1205.7px;top:1414px;font-size:29.36px;color:#212529;transform:scaleX(1.0905);">2</span>
<div style="left:0px;top:1458px;width:1444.9px;height:58.1px;background:#fdf7e4;border-bottom:2px solid #dee2e6;box-sizing:border-box;"></div>
<svg class="i" style="left:75.9px;top:1470.9px;width:30.9px;height:30.3px;" viewBox="31.86 -1408 1632.14 1632" preserveAspectRatio="none"><path fill="#007960" d="M1440 -1088C1440 -1035 1397 -992 1344 -992C1291 -992 1248 -1035 1248 -1088C1248 -1141 1291 -1184 1344 -1184C1397 -1184 1440 -1141 1440 -1088ZM1664 -1376C1664 -1394 1648 -1408 1630 -1408C1282 -1408 1091 -1328 841 -1079C784 -1021 725 -955 665 -884L286 -864C276 -863 266 -857 260 -848L36 -464C29 -452 31 -436 41 -425L105 -361C111 -355 120 -352 128 -352C131 -352 134 -352 137 -353L413 -438L694 -157L609 119C606 130 609 142 617 151L681 215C688 221 696 224 704 224C710 224 715 223 720 220L1104 -4C1113 -10 1119 -20 1120 -30L1140 -409C1211 -469 1277 -528 1335 -585C1572 -823 1664 -1044 1664 -1376Z"/></svg>
<svg class="i" style="left:138.2px;top:1469.1px;width:28px;height:27.5px;" viewBox="0 -1408 1536 1536" preserveAspectRatio="none"><path fill="#007960" d="M1024 -160C1024 -142 1010 -128 992 -128H544C526 -128 512 -142 512 -160V-320C512 -338 526 -352 544 -352H640V-672H544C526 -672 512 -686 512 -704V-864C512 -882 526 -896 544 -896H864C882 -896 896 -882 896 -864V-352H992C1010 -352 1024 -338 1024 -320V-160ZM896 -1056C896 -1038 882 -1024 864 -1024H672C654 -1024 640 -1038 640 -1056V-1216C640 -1234 654 -1248 672 -1248H864C882 -1248 896 -1234 896 -1216V-1056ZM1536 -640C1536 -1064 1192 -1408 768 -1408C344 -1408 0 -1064 0 -640C0 -216 344 128 768 128C1192 128 1536 -216 1536 -640Z"/></svg>
<svg class="i" style="left:187.9px;top:1474.4px;width:22.6px;height:21.6px;" viewBox="110 -1170 1188 1188" preserveAspectRatio="none"><path fill="#007960" d="M1298 -214C1298 -239 1288 -264 1270 -282L976 -576L1270 -870C1288 -888 1298 -913 1298 -938C1298 -963 1288 -988 1270 -1006L1134 -1142C1116 -1160 1091 -1170 1066 -1170C1041 -1170 1016 -1160 998 -1142L704 -848L410 -1142C392 -1160 367 -1170 342 -1170C317 -1170 292 -1160 274 -1142L138 -1006C120 -988 110 -963 110 -938C110 -913 120 -888 138 -870L432 -576L138 -282C120 -264 110 -239 110 -214C110 -189 120 -164 138 -146L274 -10C292 8 317 18 342 18C367 18 392 8 410 -10L704 -304L998 -10C1016 8 1041 18 1066 18C1091 18 1116 8 1134 -10L1270 -146C1288 -164 1298 -189 1298 -214Z"/></svg>
<svg class="i" style="left:236.5px;top:1470.9px;width:28.6px;height:28.6px;" viewBox="0 0 28.6 28.6" preserveAspectRatio="none"><rect x="0" y="0" width="28.6" height="28.6" rx="4.6" fill="#212529"/><polyline points="6.3,14.6 11.9,20.2 22.4,8.9" fill="none" stroke="#fff" stroke-width="4.1" stroke-linejoin="miter"/></svg>
<svg class="i" style="left:292.9px;top:1464.5px;width:36.2px;height:33.5px;" viewBox="0 0 36.2 33.5" preserveAspectRatio="none"><polyline points="0.9,22.4 7.4,1.6 16.2,25.9 21.2,8.2 26.8,32.2 33.2,18.2 34.9,26.5" fill="none" stroke="#9D248F" stroke-width="3.6" stroke-linejoin="round" stroke-linecap="round"/></svg>
<span class="t" style="left:403.27px;top:1472px;font-size:29.94px;color:#212529;transform:scaleX(1.0903);-webkit-text-stroke:0.95px;">Optimizer</span>
<span class="t u" style="left:1013.54px;top:1473px;font-size:29.94px;color:#007960;transform:scaleX(0.9480);text-decoration-thickness:2.2px;text-underline-offset:3.5px;">Area A</span>
<span class="t" style="left:1206.13px;top:1472px;font-size:29.36px;color:#212529;transform:scaleX(1.0469);">3</span>
<div style="left:0px;top:1516.1px;width:1444.9px;height:58.1px;background:#fdf7e4;border-bottom:2px solid #dee2e6;box-sizing:border-box;"></div>
<svg class="i" style="left:75.9px;top:1529px;width:30.9px;height:30.3px;" viewBox="31.86 -1408 1632.14 1632" preserveAspectRatio="none"><path fill="#007960" d="M1440 -1088C1440 -1035 1397 -992 1344 -992C1291 -992 1248 -1035 1248 -1088C1248 -1141 1291 -1184 1344 -1184C1397 -1184 1440 -1141 1440 -1088ZM1664 -1376C1664 -1394 1648 -1408 1630 -1408C1282 -1408 1091 -1328 841 -1079C784 -1021 725 -955 665 -884L286 -864C276 -863 266 -857 260 -848L36 -464C29 -452 31 -436 41 -425L105 -361C111 -355 120 -352 128 -352C131 -352 134 -352 137 -353L413 -438L694 -157L609 119C606 130 609 142 617 151L681 215C688 221 696 224 704 224C710 224 715 223 720 220L1104 -4C1113 -10 1119 -20 1120 -30L1140 -409C1211 -469 1277 -528 1335 -585C1572 -823 1664 -1044 1664 -1376Z"/></svg>
<svg class="i" style="left:138.2px;top:1527.2px;width:28px;height:27.5px;" viewBox="0 -1408 1536 1536" preserveAspectRatio="none"><path fill="#007960" d="M1024 -160C1024 -142 1010 -128 992 -128H544C526 -128 512 -142 512 -160V-320C512 -338 526 -352 544 -352H640V-672H544C526 -672 512 -686 512 -704V-864C512 -882 526 -896 544 -896H864C882 -896 896 -882 896 -864V-352H992C1010 -352 1024 -338 1024 -320V-160ZM896 -1056C896 -1038 882 -1024 864 -1024H672C654 -1024 640 -1038 640 -1056V-1216C640 -1234 654 -1248 672 -1248H864C882 -1248 896 -1234 896 -1216V-1056ZM1536 -640C1536 -1064 1192 -1408 768 -1408C344 -1408 0 -1064 0 -640C0 -216 344 128 768 128C1192 128 1536 -216 1536 -640Z"/></svg>
<svg class="i" style="left:187.9px;top:1532.5px;width:22.6px;height:21.6px;" viewBox="110 -1170 1188 1188" preserveAspectRatio="none"><path fill="#007960" d="M1298 -214C1298 -239 1288 -264 1270 -282L976 -576L1270 -870C1288 -888 1298 -913 1298 -938C1298 -963 1288 -988 1270 -1006L1134 -1142C1116 -1160 1091 -1170 1066 -1170C1041 -1170 1016 -1160 998 -1142L704 -848L410 -1142C392 -1160 367 -1170 342 -1170C317 -1170 292 -1160 274 -1142L138 -1006C120 -988 110 -963 110 -938C110 -913 120 -888 138 -870L432 -576L138 -282C120 -264 110 -239 110 -214C110 -189 120 -164 138 -146L274 -10C292 8 317 18 342 18C367 18 392 8 410 -10L704 -304L998 -10C1016 8 1041 18 1066 18C1091 18 1116 8 1134 -10L1270 -146C1288 -164 1298 -189 1298 -214Z"/></svg>
<svg class="i" style="left:236.5px;top:1529px;width:28.6px;height:28.6px;" viewBox="0 0 28.6 28.6" preserveAspectRatio="none"><rect x="0" y="0" width="28.6" height="28.6" rx="4.6" fill="#212529"/><polyline points="6.3,14.6 11.9,20.2 22.4,8.9" fill="none" stroke="#fff" stroke-width="4.1" stroke-linejoin="miter"/></svg>
<svg class="i" style="left:292.9px;top:1522.6px;width:36.2px;height:33.5px;" viewBox="0 0 36.2 33.5" preserveAspectRatio="none"><polyline points="0.9,22.4 7.4,1.6 16.2,25.9 21.2,8.2 26.8,32.2 33.2,18.2 34.9,26.5" fill="none" stroke="#CE561B" stroke-width="3.6" stroke-linejoin="round" stroke-linecap="round"/></svg>
<span class="t" style="left:347.25px;top:1531px;font-size:29.07px;color:#212529;transform:scaleX(1.0291);">%</span>
<span class="t" style="left:402.15px;top:1530px;font-size:29.94px;color:#212529;transform:scaleX(1.0788);-webkit-text-stroke:0.95px;">Relative Humidity</span>
<svg class="i" style="left:673.7px;top:1526.3px;width:34.2px;height:27.2px;" viewBox="0 -1280 1792 1536" preserveAspectRatio="none"><path fill="#007960" d="M640 -640C640 -711 583 -768 512 -768C441 -768 384 -711 384 -640C384 -569 441 -512 512 -512C583 -512 640 -569 640 -640ZM1024 -640C1024 -711 967 -768 896 -768C825 -768 768 -711 768 -640C768 -569 825 -512 896 -512C967 -512 1024 -569 1024 -640ZM1408 -640C1408 -711 1351 -768 1280 -768C1209 -768 1152 -711 1152 -640C1152 -569 1209 -512 1280 -512C1351 -512 1408 -569 1408 -640ZM896 -1152C1312 -1152 1664 -918 1664 -640C1664 -362 1312 -128 896 -128C853 -128 809 -131 766 -136L709 -142L666 -104C584 -32 492 25 391 67C417 21 442 -34 461 -105L488 -201L401 -251C228 -349 128 -491 128 -640C128 -918 480 -1152 896 -1152ZM1792 -640C1792 -993 1391 -1280 896 -1280C401 -1280 0 -993 0 -640C0 -437 132 -256 338 -139C291 28 219 88 156 159C141 177 124 192 129 217C129 217 129 217 129 218C134 240 152 256 172 256C173 256 175 256 177 256C216 251 255 244 291 234C464 190 620 108 751 -8C798 -3 847 0 896 0C1391 0 1792 -286 1792 -640Z"/></svg>
<span class="t u" style="left:1013.54px;top:1531px;font-size:29.94px;color:#007960;transform:scaleX(0.9480);text-decoration-thickness:2.2px;text-underline-offset:3.5px;">Area A</span>
<span class="t" style="left:1206.66px;top:1531px;font-size:29.36px;color:#212529;transform:scaleX(0.9847);">4</span>
<div style="left:0px;top:1574.2px;width:1444.9px;height:58.1px;background:#fdf7e4;border-bottom:2px solid #dee2e6;box-sizing:border-box;"></div>
<svg class="i" style="left:75.9px;top:1587.1px;width:30.9px;height:30.3px;" viewBox="31.86 -1408 1632.14 1632" preserveAspectRatio="none"><path fill="#007960" d="M1440 -1088C1440 -1035 1397 -992 1344 -992C1291 -992 1248 -1035 1248 -1088C1248 -1141 1291 -1184 1344 -1184C1397 -1184 1440 -1141 1440 -1088ZM1664 -1376C1664 -1394 1648 -1408 1630 -1408C1282 -1408 1091 -1328 841 -1079C784 -1021 725 -955 665 -884L286 -864C276 -863 266 -857 260 -848L36 -464C29 -452 31 -436 41 -425L105 -361C111 -355 120 -352 128 -352C131 -352 134 -352 137 -353L413 -438L694 -157L609 119C606 130 609 142 617 151L681 215C688 221 696 224 704 224C710 224 715 223 720 220L1104 -4C1113 -10 1119 -20 1120 -30L1140 -409C1211 -469 1277 -528 1335 -585C1572 -823 1664 -1044 1664 -1376Z"/></svg>
<svg class="i" style="left:138.2px;top:1585.3px;width:28px;height:27.5px;" viewBox="0 -1408 1536 1536" preserveAspectRatio="none"><path fill="#007960" d="M1024 -160C1024 -142 1010 -128 992 -128H544C526 -128 512 -142 512 -160V-320C512 -338 526 -352 544 -352H640V-672H544C526 -672 512 -686 512 -704V-864C512 -882 526 -896 544 -896H864C882 -896 896 -882 896 -864V-352H992C1010 -352 1024 -338 1024 -320V-160ZM896 -1056C896 -1038 882 -1024 864 -1024H672C654 -1024 640 -1038 640 -1056V-1216C640 -1234 654 -1248 672 -1248H864C882 -1248 896 -1234 896 -1216V-1056ZM1536 -640C1536 -1064 1192 -1408 768 -1408C344 -1408 0 -1064 0 -640C0 -216 344 128 768 128C1192 128 1536 -216 1536 -640Z"/></svg>
<svg class="i" style="left:187.9px;top:1590.6px;width:22.6px;height:21.6px;" viewBox="110 -1170 1188 1188" preserveAspectRatio="none"><path fill="#007960" d="M1298 -214C1298 -239 1288 -264 1270 -282L976 -576L1270 -870C1288 -888 1298 -913 1298 -938C1298 -963 1288 -988 1270 -1006L1134 -1142C1116 -1160 1091 -1170 1066 -1170C1041 -1170 1016 -1160 998 -1142L704 -848L410 -1142C392 -1160 367 -1170 342 -1170C317 -1170 292 -1160 274 -1142L138 -1006C120 -988 110 -963 110 -938C110 -913 120 -888 138 -870L432 -576L138 -282C120 -264 110 -239 110 -214C110 -189 120 -164 138 -146L274 -10C292 8 317 18 342 18C367 18 392 8 410 -10L704 -304L998 -10C1016 8 1041 18 1066 18C1091 18 1116 8 1134 -10L1270 -146C1288 -164 1298 -189 1298 -214Z"/></svg>
<svg class="i" style="left:236.5px;top:1587.1px;width:28.6px;height:28.6px;" viewBox="0 0 28.6 28.6" preserveAspectRatio="none"><rect x="0" y="0" width="28.6" height="28.6" rx="4.6" fill="#212529"/><polyline points="6.3,14.6 11.9,20.2 22.4,8.9" fill="none" stroke="#fff" stroke-width="4.1" stroke-linejoin="miter"/></svg>
<svg class="i" style="left:292.9px;top:1580.7px;width:36.2px;height:33.5px;" viewBox="0 0 36.2 33.5" preserveAspectRatio="none"><polyline points="0.9,22.4 7.4,1.6 16.2,25.9 21.2,8.2 26.8,32.2 33.2,18.2 34.9,26.5" fill="none" stroke="#00A2DD" stroke-width="3.6" stroke-linejoin="round" stroke-linecap="round"/></svg>
<span class="t" style="left:346.72px;top:1589px;font-size:29.07px;color:#212529;transform:scaleX(0.9241);">°F</span>
<span class="t" style="left:404.68px;top:1588px;font-size:29.94px;color:#212529;transform:scaleX(1.0302);-webkit-text-stroke:0.95px;">Wet Bulb</span>
<span class="t u" style="left:1013.54px;top:1589px;font-size:29.94px;color:#007960;transform:scaleX(0.9480);text-decoration-thickness:2.2px;text-underline-offset:3.5px;">Area A</span>
<span class="t" style="left:1206.07px;top:1589px;font-size:29.36px;color:#212529;transform:scaleX(1.0469);">5</span>
<div style="left:0px;top:1632.3px;width:1444.9px;height:58.1px;background:#fff;border-bottom:2px solid #fff;box-sizing:border-box;"></div>
<svg class="i" style="left:10.2px;top:1646.1px;width:33.2px;height:26px;" viewBox="0 -1408 1783.75 1408" preserveAspectRatio="none"><path fill="#007960" d="M888 -352H832V-448H736V-504L852 -620L1004 -468ZM1328 -1072C1337 -1063 1336 -1048 1327 -1039L977 -689C968 -680 953 -679 944 -688C935 -697 936 -712 945 -721L1295 -1071C1304 -1080 1319 -1081 1328 -1072ZM1408 -478C1408 -491 1400 -502 1388 -507C1376 -512 1363 -510 1353 -500L1289 -436C1283 -430 1280 -422 1280 -414V-288C1280 -200 1208 -128 1120 -128H288C200 -128 128 -200 128 -288V-1120C128 -1208 200 -1280 288 -1280H1120C1135 -1280 1150 -1278 1165 -1274C1176 -1270 1188 -1273 1197 -1282L1246 -1331C1254 -1339 1257 -1349 1255 -1360C1253 -1370 1246 -1379 1237 -1383C1200 -1400 1160 -1408 1120 -1408H288C129 -1408 0 -1279 0 -1120V-288C0 -129 129 0 288 0H1120C1279 0 1408 -129 1408 -288ZM1312 -1216 640 -544V-256H928L1600 -928ZM1756 -1084C1793 -1121 1793 -1183 1756 -1220L1604 -1372C1567 -1409 1505 -1409 1468 -1372L1376 -1280L1664 -992L1756 -1084Z"/></svg>
<svg class="i" style="left:75.9px;top:1645.2px;width:30.9px;height:30.3px;" viewBox="31.86 -1408 1632.14 1632" preserveAspectRatio="none"><path fill="#007960" d="M1440 -1088C1440 -1035 1397 -992 1344 -992C1291 -992 1248 -1035 1248 -1088C1248 -1141 1291 -1184 1344 -1184C1397 -1184 1440 -1141 1440 -1088ZM1664 -1376C1664 -1394 1648 -1408 1630 -1408C1282 -1408 1091 -1328 841 -1079C784 -1021 725 -955 665 -884L286 -864C276 -863 266 -857 260 -848L36 -464C29 -452 31 -436 41 -425L105 -361C111 -355 120 -352 128 -352C131 -352 134 -352 137 -353L413 -438L694 -157L609 119C606 130 609 142 617 151L681 215C688 221 696 224 704 224C710 224 715 223 720 220L1104 -4C1113 -10 1119 -20 1120 -30L1140 -409C1211 -469 1277 -528 1335 -585C1572 -823 1664 -1044 1664 -1376Z"/></svg>
<svg class="i" style="left:138.2px;top:1643.4px;width:28px;height:27.5px;" viewBox="0 -1408 1536 1536" preserveAspectRatio="none"><path fill="#007960" d="M1024 -160C1024 -142 1010 -128 992 -128H544C526 -128 512 -142 512 -160V-320C512 -338 526 -352 544 -352H640V-672H544C526 -672 512 -686 512 -704V-864C512 -882 526 -896 544 -896H864C882 -896 896 -882 896 -864V-352H992C1010 -352 1024 -338 1024 -320V-160ZM896 -1056C896 -1038 882 -1024 864 -1024H672C654 -1024 640 -1038 640 -1056V-1216C640 -1234 654 -1248 672 -1248H864C882 -1248 896 -1234 896 -1216V-1056ZM1536 -640C1536 -1064 1192 -1408 768 -1408C344 -1408 0 -1064 0 -640C0 -216 344 128 768 128C1192 128 1536 -216 1536 -640Z"/></svg>
<svg class="i" style="left:187.9px;top:1648.7px;width:22.6px;height:21.6px;" viewBox="110 -1170 1188 1188" preserveAspectRatio="none"><path fill="#007960" d="M1298 -214C1298 -239 1288 -264 1270 -282L976 -576L1270 -870C1288 -888 1298 -913 1298 -938C1298 -963 1288 -988 1270 -1006L1134 -1142C1116 -1160 1091 -1170 1066 -1170C1041 -1170 1016 -1160 998 -1142L704 -848L410 -1142C392 -1160 367 -1170 342 -1170C317 -1170 292 -1160 274 -1142L138 -1006C120 -988 110 -963 110 -938C110 -913 120 -888 138 -870L432 -576L138 -282C120 -264 110 -239 110 -214C110 -189 120 -164 138 -146L274 -10C292 8 317 18 342 18C367 18 392 8 410 -10L704 -304L998 -10C1016 8 1041 18 1066 18C1091 18 1116 8 1134 -10L1270 -146C1288 -164 1298 -189 1298 -214Z"/></svg>
<div style="left:237.7px;top:1646.7px;width:25.6px;height:25.6px;border:2.1px solid #212529;border-radius:6px;background:#fff;box-sizing:border-box;"></div>
<svg class="i" style="left:297px;top:1638px;width:29.6px;height:35.4px;" viewBox="0 0 29.6 35.4" preserveAspectRatio="none"><rect x="0" y="0" width="13.6" height="35.4" rx="2.4" fill="#E1498E"/><rect x="16" y="0" width="13.6" height="35.4" rx="2.4" fill="#E1498E"/><polyline points="0,19 2.6,12 4.6,9 8.6,29 11.2,6 14.6,20 17,9 19.2,6 22.6,29 25.8,7 27.6,16 29.6,22" fill="none" stroke="#fff" stroke-width="1.7" stroke-linejoin="round"/></svg>
<span class="t" style="left:402.23px;top:1646px;font-size:29.94px;color:#212529;transform:scaleX(1.0472);-webkit-text-stroke:0.95px;">High Power</span>
<span class="t u" style="left:1013.54px;top:1647px;font-size:29.94px;color:#007960;transform:scaleX(0.9480);text-decoration-thickness:2.2px;text-underline-offset:3.5px;">Area A</span>
<div style="left:1444.9px;top:1207.1px;width:20.1px;height:488.9px;background:#f4f4f4;border-left:2px solid #d0d0d0;border-right:2px solid #d0d0d0;box-sizing:border-box;"></div>
<div style="left:1450.2px;top:1455.5px;width:3px;height:20.1px;background:#8a8a8a;"></div>
<div style="left:1456.4px;top:1455.5px;width:3px;height:20.1px;background:#8a8a8a;"></div>
<div style="left:1465px;top:1207.1px;width:1140px;height:64.6px;background:#007960;"></div>
<svg class="i" style="left:1495.5px;top:1216.4px;width:24.4px;height:35.3px;" viewBox="0 0 24.4 35.3" preserveAspectRatio="none"><path d="M7.2 1.3H1.3V34H7.2M17.2 1.3H23.1V34H17.2" fill="none" stroke="#fff" stroke-width="3.2"/><polyline points="3.4,19.5 7.2,8 11.2,24.5 14.2,11.5 17.6,29 20.6,17.5" fill="none" stroke="#fff" stroke-width="2.4" stroke-linejoin="round" stroke-linecap="round"/></svg>
<span class="t" style="left:1531.01px;top:1223px;font-size:31.54px;color:#fff;transform:scaleX(0.9419);">Capsules</span>
<div style="left:2489.5px;top:1212px;width:107.9px;height:54.9px;background:#fff;border:1.6px solid #c8c8c8;border-radius:7px;box-sizing:border-box;"></div>
<div style="left:2543.7px;top:1213px;width:1.7px;height:53px;background:#c8c8c8;"></div>
<svg class="i" style="left:2503.6px;top:1226.5px;width:27.8px;height:27.7px;" viewBox="0 -1408 1664 1664" preserveAspectRatio="none"><path fill="#212529" d="M1024 -736C1024 -753 1009 -768 992 -768H768V-992C768 -1009 753 -1024 736 -1024H672C655 -1024 640 -1009 640 -992V-768H416C399 -768 384 -753 384 -736V-672C384 -655 399 -640 416 -640H640V-416C640 -399 655 -384 672 -384H736C753 -384 768 -399 768 -416V-640H992C1009 -640 1024 -655 1024 -672ZM1152 -704C1152 -457 951 -256 704 -256C457 -256 256 -457 256 -704C256 -951 457 -1152 704 -1152C951 -1152 1152 -951 1152 -704ZM1664 128C1664 94 1650 61 1627 38L1284 -305C1365 -422 1408 -562 1408 -704C1408 -1093 1093 -1408 704 -1408C315 -1408 0 -1093 0 -704C0 -315 315 0 704 0C846 0 986 -43 1103 -124L1446 218C1469 242 1502 256 1536 256C1607 256 1664 199 1664 128Z"/></svg>
<div style="left:2558.9px;top:1226.5px;width:23.4px;height:23.5px;border:2.2px solid #444;border-radius:5px;box-sizing:border-box;"></div>
<div style="left:2563.6px;top:1237.2px;width:14px;height:2.2px;background:#444;"></div>
<div style="left:1480.6px;top:1304.3px;width:25.6px;height:25.6px;border:2.1px solid #212529;border-radius:6px;background:#fff;box-sizing:border-box;"></div>
<span class="t" style="left:1589.01px;top:1305px;font-size:30.23px;color:#007960;transform:scaleX(1.0967);-webkit-text-stroke:0.95px;">Start</span>
<svg class="i" style="left:1678px;top:1305.4px;width:19.6px;height:10.6px;" viewBox="0 -832 1024 576" preserveAspectRatio="none"><path fill="#007960" d="M1024 -320C1024 -337 1017 -353 1005 -365L557 -813C545 -825 529 -832 512 -832C495 -832 479 -825 467 -813L19 -365C7 -353 0 -337 0 -320C0 -285 29 -256 64 -256H960C995 -256 1024 -285 1024 -320Z"/></svg>
<svg class="i" style="left:2119.2px;top:1293.6px;width:36.2px;height:30.5px;" viewBox="0 0 36.2 30.5" preserveAspectRatio="none"><rect x="1" y="1" width="25.6" height="23.2" fill="none" stroke="#212529" stroke-width="2"/><path d="M9.5 1V24.2M18.1 1V24.2M1 8.7H26.6M1 16.4H26.6" stroke="#212529" stroke-width="1.9" fill="none"/><circle cx="24" cy="18.3" r="12.2" fill="#fff"/><circle cx="24" cy="18.3" r="10.7" fill="#212529"/><path d="M24 11.6V25M17.3 18.3H30.7" stroke="#fff" stroke-width="4" fill="none"/></svg>
<div style="left:2186.2px;top:1276.9px;width:1.8px;height:64.8px;background:#c8c8c8;"></div>
<svg class="i" style="left:2232px;top:1293.6px;width:36.2px;height:30.5px;" viewBox="0 0 36.2 30.5" preserveAspectRatio="none"><rect x="1" y="1" width="25.6" height="23.2" fill="none" stroke="#4055A3" stroke-width="2"/><path d="M9.5 1V24.2M18.1 1V24.2M1 8.7H26.6M1 16.4H26.6" stroke="#4055A3" stroke-width="1.9" fill="none"/><circle cx="24" cy="18.3" r="12.2" fill="#fff"/><circle cx="24" cy="18.3" r="10.7" fill="#4055A3"/><path d="M24 11.6V25M17.3 18.3H30.7" stroke="#fff" stroke-width="4" fill="none"/></svg>
<svg class="i" style="left:2312.1px;top:1293.6px;width:36.2px;height:30.5px;" viewBox="0 0 36.2 30.5" preserveAspectRatio="none"><rect x="1" y="1" width="25.6" height="23.2" fill="none" stroke="#068C45" stroke-width="2"/><path d="M9.5 1V24.2M18.1 1V24.2M1 8.7H26.6M1 16.4H26.6" stroke="#068C45" stroke-width="1.9" fill="none"/><circle cx="24" cy="18.3" r="12.2" fill="#fff"/><circle cx="24" cy="18.3" r="10.7" fill="#068C45"/><path d="M24 11.6V25M17.3 18.3H30.7" stroke="#fff" stroke-width="4" fill="none"/></svg>
<svg class="i" style="left:2392.2px;top:1293.6px;width:36.2px;height:30.5px;" viewBox="0 0 36.2 30.5" preserveAspectRatio="none"><rect x="1" y="1" width="25.6" height="23.2" fill="none" stroke="#9D248F" stroke-width="2"/><path d="M9.5 1V24.2M18.1 1V24.2M1 8.7H26.6M1 16.4H26.6" stroke="#9D248F" stroke-width="1.9" fill="none"/><circle cx="24" cy="18.3" r="12.2" fill="#fff"/><circle cx="24" cy="18.3" r="10.7" fill="#9D248F"/><path d="M24 11.6V25M17.3 18.3H30.7" stroke="#fff" stroke-width="4" fill="none"/></svg>
<svg class="i" style="left:2472.3px;top:1293.6px;width:36.2px;height:30.5px;" viewBox="0 0 36.2 30.5" preserveAspectRatio="none"><rect x="1" y="1" width="25.6" height="23.2" fill="none" stroke="#CE561B" stroke-width="2"/><path d="M9.5 1V24.2M18.1 1V24.2M1 8.7H26.6M1 16.4H26.6" stroke="#CE561B" stroke-width="1.9" fill="none"/><circle cx="24" cy="18.3" r="12.2" fill="#fff"/><circle cx="24" cy="18.3" r="10.7" fill="#CE561B"/><path d="M24 11.6V25M17.3 18.3H30.7" stroke="#fff" stroke-width="4" fill="none"/></svg>
<svg class="i" style="left:2552.4px;top:1293.6px;width:36.2px;height:30.5px;" viewBox="0 0 36.2 30.5" preserveAspectRatio="none"><rect x="1" y="1" width="25.6" height="23.2" fill="none" stroke="#00A2DD" stroke-width="2"/><path d="M9.5 1V24.2M18.1 1V24.2M1 8.7H26.6M1 16.4H26.6" stroke="#00A2DD" stroke-width="1.9" fill="none"/><circle cx="24" cy="18.3" r="12.2" fill="#fff"/><circle cx="24" cy="18.3" r="10.7" fill="#00A2DD"/><path d="M24 11.6V25M17.3 18.3H30.7" stroke="#fff" stroke-width="4" fill="none"/></svg>
<div style="left:1465px;top:1347.4px;width:1140px;height:4.7px;background:#dee2e6;"></div>
<div style="left:1465px;top:1352.1px;width:1140px;height:57.9px;background:#f9f9f9;border-bottom:1.8px solid #dee2e6;box-sizing:border-box;"></div>
<div style="left:1480.6px;top:1365.8px;width:25.6px;height:25.6px;border:2.1px solid #212529;border-radius:6px;background:#fff;box-sizing:border-box;"></div>
<svg class="i" style="left:1542px;top:1357.6px;width:24.4px;height:35.3px;" viewBox="0 0 24.4 35.3" preserveAspectRatio="none"><path d="M7.2 1.3H1.3V34H7.2M17.2 1.3H23.1V34H17.2" fill="none" stroke="#E1498E" stroke-width="3.0"/><polyline points="3.4,19.5 7.2,8 11.2,24.5 14.2,11.5 17.6,29 20.6,17.5" fill="none" stroke="#E1498E" stroke-width="2.4" stroke-linejoin="round" stroke-linecap="round"/></svg>
<span class="t" style="left:1590.44px;top:1366px;font-size:30.23px;color:#212529;transform:scaleX(0.9393);">Aug 31, 2020 7:11 PM</span>
<div style="left:1465px;top:1410px;width:1140px;height:57.9px;background:#fff;border-bottom:1.8px solid #dee2e6;box-sizing:border-box;"></div>
<div style="left:1480.6px;top:1423.7px;width:25.6px;height:25.6px;border:2.1px solid #212529;border-radius:6px;background:#fff;box-sizing:border-box;"></div>
<svg class="i" style="left:1542px;top:1415.5px;width:24.4px;height:35.3px;" viewBox="0 0 24.4 35.3" preserveAspectRatio="none"><path d="M7.2 1.3H1.3V34H7.2M17.2 1.3H23.1V34H17.2" fill="none" stroke="#E1498E" stroke-width="3.0"/><polyline points="3.4,19.5 7.2,8 11.2,24.5 14.2,11.5 17.6,29 20.6,17.5" fill="none" stroke="#E1498E" stroke-width="2.4" stroke-linejoin="round" stroke-linecap="round"/></svg>
<span class="t" style="left:1589.23px;top:1424px;font-size:30.23px;color:#212529;transform:scaleX(0.9363);">Sep 1, 2020 12:07 PM</span>
<div style="left:1465px;top:1467.9px;width:1140px;height:56.2px;background:#f9f9f9;border-bottom:1.8px solid #f9f9f9;box-sizing:border-box;"></div>
<div style="left:1480.6px;top:1481.6px;width:25.6px;height:25.6px;border:2.1px solid #212529;border-radius:6px;background:#fff;box-sizing:border-box;"></div>
<svg class="i" style="left:1542px;top:1473.4px;width:24.4px;height:35.3px;" viewBox="0 0 24.4 35.3" preserveAspectRatio="none"><path d="M7.2 1.3H1.3V34H7.2M17.2 1.3H23.1V34H17.2" fill="none" stroke="#E1498E" stroke-width="3.0"/><polyline points="3.4,19.5 7.2,8 11.2,24.5 14.2,11.5 17.6,29 20.6,17.5" fill="none" stroke="#E1498E" stroke-width="2.4" stroke-linejoin="round" stroke-linecap="round"/></svg>
<span class="t" style="left:1589.22px;top:1482px;font-size:30.23px;color:#212529;transform:scaleX(0.9435);">Sep 2, 2020 12:11 PM</span>
<svg class="i" style="left:0;top:1280px;width:400px;height:240px" viewBox="0 1280 400 240"><polygon points="112.6,1333.3 177.0,1418.9 149.3,1439.7 233.0,1481.6 215.9,1389.6 188.2,1410.4 123.8,1324.9" fill="#fe0000"/></svg>
</div></body></html>
